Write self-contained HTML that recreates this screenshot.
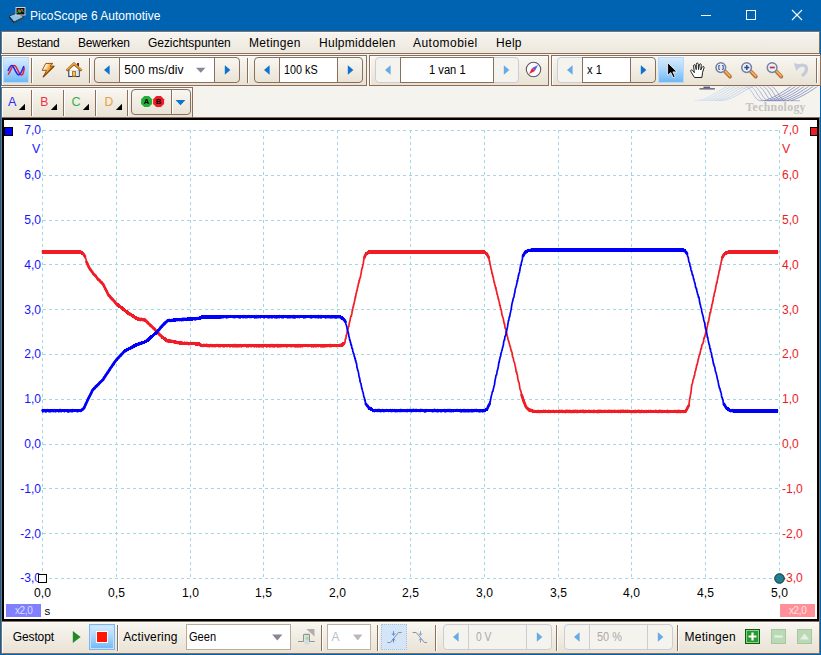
<!DOCTYPE html>
<html lang="nl">
<head>
<meta charset="utf-8">
<title>PicoScope 6 Automotive</title>
<style>
*{box-sizing:border-box;margin:0;padding:0}
html,body{width:821px;height:655px;overflow:hidden;background:#0063b1}
body{font-family:"Liberation Sans",sans-serif;font-size:12px;color:#000;position:relative}
.abs{position:absolute}
#title{position:absolute;left:0;top:0;width:821px;height:31px;background:#0063b1}
#title .t{position:absolute;left:30px;top:9px;color:#fff;font-size:12px;white-space:nowrap}
.strip{position:absolute;border:1px solid #8a6f5c;box-shadow:inset 1px 1px 0 #fdfcfa;background:linear-gradient(#f9f7f2,#e9e2d4)}
#menu span{position:absolute;top:3px;font-size:12px;white-space:nowrap;color:#000;line-height:16px}
#gap{position:absolute;left:1px;top:54px;width:819px;height:64px;background:#f5f3ee}
.selbtn{position:absolute;border:1px solid #b4dafc;background:linear-gradient(#d6ebfd,#a9d5fb 50%,#6fb8f6)}
#chartf{position:absolute;left:1px;top:117px;width:819px;height:505px;border:1px solid #8a6f5c}
#chart{position:absolute;left:2px;top:118px;width:817px;height:503px;background:#fff;border:2px solid #000}
#plot{position:absolute;left:0;top:0;width:821px;height:655px}
.yl{position:absolute;font-size:12.1px;height:16px;line-height:16px;white-space:nowrap}
.yl.b{right:780px;color:#1414ff;text-align:right}
.yl.r{left:782px;color:#ee1c25}
.xl{position:absolute;top:585px;width:40px;text-align:center;font-size:12.1px;line-height:16px;color:#000}
.lbl{position:absolute;font-size:12px;white-space:nowrap;line-height:16px}
#f_title{letter-spacing:0.02px}
#f_m1{letter-spacing:-0.22px}
#f_m2{letter-spacing:-0.20px}
#f_m3{letter-spacing:-0.05px}
#f_m4{letter-spacing:0.30px}
#f_m5{letter-spacing:0.28px}
#f_m6{letter-spacing:0.47px}
#f_m7{letter-spacing:0.27px}
#f_s1{letter-spacing:0.13px}
#f_s2{display:inline-block;transform-origin:0 50%;transform:scaleX(0.899)}
#f_s3{display:inline-block;transform-origin:0 50%;transform:scaleX(0.930)}
#f_s4{display:inline-block;transform-origin:0 50%;transform:scaleX(0.927)}
#f_g{letter-spacing:-0.13px}
#f_a{letter-spacing:0.18px}
#f_ge{display:inline-block;transform-origin:0 50%;transform:scaleX(0.923)}
#f_s5{display:inline-block;transform-origin:0 50%;transform:scaleX(0.855)}
#f_s6{display:inline-block;transform-origin:0 50%;transform:scaleX(0.910)}
#f_me{letter-spacing:0.23px}

</style>
</head>
<body>
<!-- title bar -->
<div id="title">
  <svg class="abs" style="left:8px;top:6px" width="18" height="18" viewBox="0 0 18 18">
    <polygon points="1,10 9,7 16,11 6,16" fill="#8ec3ea" stroke="#2b3540" stroke-width="1"/>
    <polygon points="1,10 6,16 6,17.5 1,11.5" fill="#1f2830"/>
    <polygon points="6,16 16,11 16,12.2 6,17.5" fill="#39444f"/>
    <rect x="8" y="1.5" width="9" height="7.5" fill="#111" stroke="#c8d2dc" stroke-width="1"/>
    <path d="M9.5 7 L11 4 L12 6.5 L13.5 3.5 L15.5 6" stroke="#28d040" stroke-width="1" fill="none"/>
    <path d="M9.5 4 L11.5 3 L13 5.5 L15 3" stroke="#e82020" stroke-width="1" fill="none"/>
  </svg>
  <div class="t" id="f_title">PicoScope 6 Automotive</div>
  <svg class="abs" style="left:690px;top:0" width="131" height="31" viewBox="0 0 131 31">
    <path d="M11 15.5 H21" stroke="#fff" stroke-width="1"/>
    <rect x="56.5" y="10.5" width="9" height="9" fill="none" stroke="#fff" stroke-width="1"/>
    <path d="M102 10 L112 20 M112 10 L102 20" stroke="#fff" stroke-width="1.1"/>
  </svg>
</div>

<!-- menu bar : rows 31..53, cols 1..819 -->
<div id="menu" class="strip" style="left:1px;top:31px;width:819px;height:23px;background:linear-gradient(#f6f4ef,#ede8dd)">
  <span id="f_m1" style="left:15px">Bestand</span>
  <span id="f_m2" style="left:76px">Bewerken</span>
  <span id="f_m3" style="left:146px">Gezichtspunten</span>
  <span id="f_m4" style="left:247px">Metingen</span>
  <span id="f_m5" style="left:317px">Hulpmiddelen</span>
  <span id="f_m6" style="left:411px">Automobiel</span>
  <span id="f_m7" style="left:494px">Help</span>
</div>

<div id="gap"></div>
<!-- toolbar 1 strips: rows 55..85 -->
<div class="strip" style="left:1px;top:55px;width:366px;height:31px"></div>
<div class="strip" style="left:369px;top:55px;width:180px;height:31px"></div>
<div class="strip" style="left:551px;top:55px;width:270px;height:31px"></div>
<!-- toolbar 2 strip: rows 87..117, cols 1..192 -->
<div class="strip" style="left:1px;top:87px;width:192px;height:31px"></div>

<!-- chart frame -->
<div id="chartf"></div><div id="chart"></div>
<!-- status strip -->
<div class="strip" style="left:1px;top:621px;width:819px;height:33px"></div>

<!-- selected buttons -->
<div class="selbtn" style="left:3px;top:57px;width:26px;height:26px"></div>
<div class="selbtn" style="left:658px;top:57px;width:26px;height:26px"></div>
<div class="selbtn" style="left:89px;top:624px;width:26px;height:26px;border-color:#7ab8f2;box-shadow:inset 0 0 0 1px #c4e2fd"></div>
<div class="selbtn" style="left:381px;top:624px;width:26px;height:26px;background:#d3e5f7;border:1px dotted #a8c4e0"></div>

<!-- separators -->
<div class="abs" style="left:31px;top:58px;width:2px;height:25px;border-left:1px solid #8a6f5c;border-right:1px solid #fff"></div>
<div class="abs" style="left:89px;top:58px;width:2px;height:25px;border-left:1px solid #8a6f5c;border-right:1px solid #fff"></div>
<div class="abs" style="left:247px;top:58px;width:2px;height:25px;border-left:1px solid #8a6f5c;border-right:1px solid #fff"></div>
<div class="abs" style="left:816px;top:58px;width:2px;height:25px;border-left:1px solid #8a6f5c;border-right:1px solid #fff"></div>
<div class="abs" style="left:31px;top:90px;width:2px;height:26px;border-left:1px solid #8a6f5c;border-right:1px solid #fff"></div>
<div class="abs" style="left:63px;top:90px;width:2px;height:26px;border-left:1px solid #8a6f5c;border-right:1px solid #fff"></div>
<div class="abs" style="left:95px;top:90px;width:2px;height:26px;border-left:1px solid #8a6f5c;border-right:1px solid #fff"></div>
<div class="abs" style="left:127px;top:90px;width:2px;height:26px;border-left:1px solid #8a6f5c;border-right:1px solid #fff"></div>
<div class="abs" style="left:117px;top:625px;width:2px;height:26px;border-left:1px solid #8a6f5c;border-right:1px solid #fff"></div>
<div class="abs" style="left:321px;top:625px;width:2px;height:26px;border-left:1px solid #8a6f5c;border-right:1px solid #fff"></div>
<div class="abs" style="left:377px;top:625px;width:2px;height:26px;border-left:1px solid #8a6f5c;border-right:1px solid #fff"></div>
<div class="abs" style="left:435px;top:625px;width:2px;height:26px;border-left:1px solid #8a6f5c;border-right:1px solid #fff"></div>
<div class="abs" style="left:556px;top:625px;width:2px;height:26px;border-left:1px solid #8a6f5c;border-right:1px solid #fff"></div>
<div class="abs" style="left:677px;top:625px;width:2px;height:26px;border-left:1px solid #8a6f5c;border-right:1px solid #fff"></div>

<!-- AB button rows 89..114 cols 131..190 -->
<div class="abs" style="left:131px;top:89px;width:41px;height:26px;border:1px solid #8a6f5c;border-radius:4px 0 0 4px;background:linear-gradient(#f9f7f2,#eae3d6)"></div>
<div class="abs" style="left:171px;top:89px;width:20px;height:26px;border:1px solid #8a6f5c;border-radius:0 4px 4px 0;background:linear-gradient(#f9f7f2,#eae3d6);box-shadow:inset 1px 0 0 #fff"></div>

<!-- combos in status bar -->
<div class="abs" style="left:186px;top:624px;width:105px;height:26px;border:1px solid #b9ad9f;background:#fff"></div>
<div class="abs" style="left:327px;top:624px;width:44px;height:26px;border:1px solid #bcb2a6;background:#fff"></div>

<div class="abs"  style="left:94px;top:57px;width:26px;height:26px;border:1px solid #8a6f5c;border-radius:4px 0 0 4px;background:linear-gradient(#f9f7f2,#eae3d6)"></div>
<div class="abs"  style="left:214px;top:57px;width:26px;height:26px;border:1px solid #8a6f5c;border-radius:0 4px 4px 0;background:linear-gradient(#f9f7f2,#eae3d6)"></div>
<div class="abs"  style="left:119px;top:57px;width:96px;height:26px;border:1px solid #8a6f5c;background:#fff"></div>
<div class="abs"  style="left:119px;top:57px;width:1px;height:26px;background:#8a6f5c"></div>
<div class="abs"  style="left:214px;top:57px;width:1px;height:26px;background:#8a6f5c"></div>
<span class="lbl" id="f_s1" style="left:124.3px;top:62px;color:#000">500 ms/div</span>
<div class="abs"  style="left:254px;top:57px;width:26px;height:26px;border:1px solid #8a6f5c;border-radius:4px 0 0 4px;background:linear-gradient(#f9f7f2,#eae3d6)"></div>
<div class="abs"  style="left:337px;top:57px;width:26px;height:26px;border:1px solid #8a6f5c;border-radius:0 4px 4px 0;background:linear-gradient(#f9f7f2,#eae3d6)"></div>
<div class="abs"  style="left:279px;top:57px;width:59px;height:26px;border:1px solid #8a6f5c;background:#fff"></div>
<div class="abs"  style="left:279px;top:57px;width:1px;height:26px;background:#8a6f5c"></div>
<div class="abs"  style="left:337px;top:57px;width:1px;height:26px;background:#8a6f5c"></div>
<span class="lbl" id="f_s2" style="left:283.6px;top:62px;color:#000">100 kS</span>
<div class="abs"  style="left:375px;top:57px;width:26px;height:26px;border:1px solid #cbcdd2;border-radius:4px 0 0 4px;background:#f5f3ee"></div>
<div class="abs"  style="left:493px;top:57px;width:26px;height:26px;border:1px solid #cbcdd2;border-radius:0 4px 4px 0;background:#f5f3ee"></div>
<div class="abs"  style="left:400px;top:57px;width:94px;height:26px;border:1px solid #8a6f5c;background:#fff"></div>
<div class="abs"  style="left:400px;top:57px;width:1px;height:26px;background:#8a6f5c"></div>
<div class="abs"  style="left:493px;top:57px;width:1px;height:26px;background:#8a6f5c"></div>
<span class="lbl" id="f_s3" style="left:428.6px;top:62px;color:#000">1 van 1</span>
<div class="abs"  style="left:557px;top:57px;width:26px;height:26px;border:1px solid #cbcdd2;border-radius:4px 0 0 4px;background:#f5f3ee"></div>
<div class="abs"  style="left:630px;top:57px;width:26px;height:26px;border:1px solid #8a6f5c;border-radius:0 4px 4px 0;background:linear-gradient(#f9f7f2,#eae3d6)"></div>
<div class="abs"  style="left:582px;top:57px;width:49px;height:26px;border:1px solid #8a6f5c;background:#fff"></div>
<div class="abs"  style="left:582px;top:57px;width:1px;height:26px;background:#8a6f5c"></div>
<div class="abs"  style="left:630px;top:57px;width:1px;height:26px;background:#8a6f5c"></div>
<span class="lbl" id="f_s4" style="left:586.6px;top:62px;color:#000">x 1</span>
<div class="abs"  style="left:443px;top:624px;width:26px;height:26px;border:1px solid #cbcdd2;border-radius:4px 0 0 4px;background:#f5f3ee"></div>
<div class="abs"  style="left:526px;top:624px;width:26px;height:26px;border:1px solid #cbcdd2;border-radius:0 4px 4px 0;background:#f5f3ee"></div>
<div class="abs"  style="left:468px;top:624px;width:59px;height:26px;border:1px solid #cbcdd2;background:#f5f3ee"></div>
<span class="lbl" id="f_s5" style="left:475.8px;top:629px;color:#a9a9a9">0 V</span>
<div class="abs"  style="left:564px;top:624px;width:26px;height:26px;border:1px solid #cbcdd2;border-radius:4px 0 0 4px;background:#f5f3ee"></div>
<div class="abs"  style="left:647px;top:624px;width:26px;height:26px;border:1px solid #cbcdd2;border-radius:0 4px 4px 0;background:#f5f3ee"></div>
<div class="abs"  style="left:589px;top:624px;width:59px;height:26px;border:1px solid #cbcdd2;background:#f5f3ee"></div>
<span class="lbl" id="f_s6" style="left:597.0px;top:629px;color:#a9a9a9">50 %</span>


<!-- text labels -->
<span class="lbl" style="left:8px;top:94px;color:#2a2aff;font-size:12.6px">A</span>
<span class="lbl" style="left:40.2px;top:94px;color:#f03040;font-size:12.2px">B</span>
<span class="lbl" style="left:71.6px;top:94px;color:#35b04a;font-size:12.6px">C</span>
<span class="lbl" style="left:104.4px;top:94px;color:#e8a040;font-size:12.2px">D</span>
<span class="lbl" id="f_g" style="left:12.8px;top:629px">Gestopt</span>
<span class="lbl" id="f_a" style="left:123.2px;top:629px">Activering</span>
<span class="lbl" id="f_ge" style="left:189.2px;top:629px">Geen</span>
<span class="lbl" style="left:331.5px;top:629px;color:#bcc0c6">A</span>
<span class="lbl" id="f_me" style="left:684.6px;top:629px">Metingen</span>

<!-- icon layer -->
<svg id="icons" class="abs" style="left:0;top:0" width="821" height="655" viewBox="0 0 821 655">
<polygon points="109.6,65.2 109.6,74.8 104.0,70.0" fill="#0a74d0"/>
<polygon points="224.8,65.2 224.8,74.8 230.4,70.0" fill="#0a74d0"/>
<polygon points="196.0,67.8 205.5,67.8 200.8,72.8" fill="#8d8395"/>
<polygon points="269.6,65.2 269.6,74.8 264.0,70.0" fill="#0a74d0"/>
<polygon points="347.8,65.2 347.8,74.8 353.4,70.0" fill="#0a74d0"/>
<polygon points="390.6,65.2 390.6,74.8 385.0,70.0" fill="#66abe8"/>
<polygon points="503.8,65.2 503.8,74.8 509.4,70.0" fill="#66abe8"/>
<polygon points="572.6,65.2 572.6,74.8 567.0,70.0" fill="#66abe8"/>
<polygon points="640.8,65.2 640.8,74.8 646.4,70.0" fill="#0a74d0"/>
<polygon points="458.6,632.2 458.6,641.8 453.0,637.0" fill="#66abe8"/>
<polygon points="536.8,632.2 536.8,641.8 542.4,637.0" fill="#66abe8"/>
<polygon points="579.6,632.2 579.6,641.8 574.0,637.0" fill="#66abe8"/>
<polygon points="657.8,632.2 657.8,641.8 663.4,637.0" fill="#66abe8"/>
  <!-- scope view (sine waves) -->
  <path d="M7.8 74.5 C9.5 74.5,11.5 65.5,14.3 65.5 S18.5 75,21.2 75 S23.6 70,24.4 67.5" fill="none" stroke="#ee1c2e" stroke-width="1.5"/>
  <path d="M8 71 C9.5 67,10.8 65.6,12.2 65.6 S16.3 75,18.6 75 S22.5 69,24 66" fill="none" stroke="#2222ee" stroke-width="1.5"/>
  <!-- lightning -->
  <defs>
    <linearGradient id="lg1" x1="0" y1="0.25" x2="1" y2="0.75"><stop offset="0.15" stop-color="#ffffff"/><stop offset="0.5" stop-color="#f4a830"/><stop offset="0.85" stop-color="#a85408"/></linearGradient>
  </defs>
  <path d="M45.8 63.4 L52.9 63.4 L50 66.2 L54 66.2 L43.3 76.8 L46.6 70.3 L42.2 70.3 Z" fill="url(#lg1)" stroke="#96520e" stroke-width="1" stroke-linejoin="round"/>
  <path d="M54 66.2 L43.3 76.8" stroke="#8a4608" stroke-width="1.3" stroke-linecap="round"/>
  <!-- home -->
  <rect x="77.1" y="63" width="1.9" height="4.6" fill="#5e1238"/>
  <rect x="68.8" y="69.6" width="10.4" height="6.9" fill="#fdfdff" stroke="#2c3c4c" stroke-width="1.1"/>
  <rect x="76.6" y="70.4" width="2" height="5.4" fill="#cfe4f4"/>
  <polygon points="68.6,70 74,64.8 79.4,70" fill="#fdfdff"/>
  <path d="M66.6 70.6 L74 63.8 L81.6 70.6" fill="none" stroke="#8a5210" stroke-width="2.6"/>
  <path d="M66.8 70 L74 63.4 L81.4 70" fill="none" stroke="#eea838" stroke-width="1.5"/>
  <rect x="72.4" y="71.6" width="3.2" height="4.6" fill="#f4c060" stroke="#a86a14" stroke-width="0.9"/>
  <!-- compass -->
  <circle cx="533.5" cy="69.5" r="7.2" fill="#fdfdfd" stroke="#5a5a66" stroke-width="1.1"/>
  <polygon points="538,65 534.9,70.9 532.1,68.1" fill="#5a5aee"/>
  <polygon points="529,74 532.1,68.1 534.9,70.9" fill="#ee2030"/>
  <!-- arrow cursor -->
  <path d="M667.6 62.6 L667.6 75.4 L670.8 72.6 L673.2 77.6 L675.2 76.7 L672.9 71.9 L677 71.9 Z" fill="#000" stroke="#fff" stroke-width="0.8"/>
  <!-- hand -->
  <path d="M694.5 77.5 L691.2 72.2 C689.8 69.8,691.6 69.2,692.8 70.8 L694.3 72.6 L693.6 66 C693.4 64.4,695.2 64.2,695.5 65.8 L696.2 69.6 L696.3 64.2 C696.3 62.6,698.2 62.6,698.3 64.2 L698.5 69.6 L699.4 64.8 C699.7 63.3,701.5 63.6,701.3 65.2 L700.7 70 L702.2 67.2 C702.9 65.8,704.6 66.5,704 68 L702.6 72.2 L701.9 77.5 Z" fill="#fff" stroke="#222" stroke-width="1" stroke-linejoin="round"/>
  <!-- zoom icons -->
  <g>
    <path d="M725.2 71.6 L730 76.6" stroke="#b87434" stroke-width="3.8" stroke-linecap="round"/>
    <path d="M725 71 L729.8 76" stroke="#f4b470" stroke-width="1.6" stroke-linecap="round"/>
    <circle cx="720.8" cy="67.6" r="4.7" fill="#e2eaf6" stroke="#74849e" stroke-width="1.8"/>
    <circle cx="720.8" cy="67.6" r="3.6" fill="none" stroke="#f6f8fc" stroke-width="0.8"/>
  </g>
  <g transform="translate(25.8 0)">
    <path d="M725.2 71.6 L730 76.6" stroke="#b87434" stroke-width="3.8" stroke-linecap="round"/>
    <path d="M725 71 L729.8 76" stroke="#f4b470" stroke-width="1.6" stroke-linecap="round"/>
    <circle cx="720.8" cy="67.6" r="4.7" fill="#e2eaf6" stroke="#74849e" stroke-width="1.8"/>
    <circle cx="720.8" cy="67.6" r="3.6" fill="none" stroke="#f6f8fc" stroke-width="0.8"/>
  </g>
  <g transform="translate(51.3 0)">
    <path d="M725.2 71.6 L730 76.6" stroke="#b87434" stroke-width="3.8" stroke-linecap="round"/>
    <path d="M725 71 L729.8 76" stroke="#f4b470" stroke-width="1.6" stroke-linecap="round"/>
    <circle cx="720.8" cy="67.6" r="4.7" fill="#e2eaf6" stroke="#74849e" stroke-width="1.8"/>
    <circle cx="720.8" cy="67.6" r="3.6" fill="none" stroke="#f6f8fc" stroke-width="0.8"/>
  </g>
  <path d="M719.8 65.5 H718.8 V69.5 H719.8 M722.2 65.5 H723.2 V69.5 H722.2" fill="none" stroke="#33489a" stroke-width="1"/>
  <path d="M744.3 67.5 H749.3 M746.8 65 V70" stroke="#33489a" stroke-width="1.5"/>
  <path d="M769.8 67.5 H774.8" stroke="#b83040" stroke-width="1.6"/>
  <!-- undo -->
  <path d="M798.5 66.6 C802.5 63.4,807.4 65.6,806.4 70 C806 72.2,804.4 74,802 76" fill="none" stroke="#c4ccd9" stroke-width="3.2"/>
  <polygon points="793.8,63.2 801.6,64.4 796.4,71" fill="#c4ccd9"/>
  <!-- channel dropdown triangles -->
  <polygon points="25,103.8 25,110 18.8,110" fill="#000"/>
  <polygon points="57,103.8 57,110 50.8,110" fill="#000"/>
  <polygon points="89,103.8 89,110 82.8,110" fill="#000"/>
  <polygon points="122,103.8 122,110 115.8,110" fill="#000"/>
  <!-- AB octagons -->
  <polygon points="144.3,96.1 148.9,96.1 152.1,99.3 152.1,103.9 148.9,107.1 144.3,107.1 141.1,103.9 141.1,99.3" fill="#22b03a"/>
  <polygon points="156.3,96.1 160.9,96.1 164.1,99.3 164.1,103.9 160.9,107.1 156.3,107.1 153.1,103.9 153.1,99.3" fill="#ee1c25"/>
  <text x="146.6" y="104.3" font-size="7.6" font-weight="bold" text-anchor="middle" font-family="Liberation Sans, sans-serif" fill="#000">A</text>
  <text x="158.6" y="104.3" font-size="7.6" font-weight="bold" text-anchor="middle" font-family="Liberation Sans, sans-serif" fill="#000">B</text>
  <polygon points="175.6,100 185.4,100 180.5,105.2" fill="#0a74d0"/>
  <!-- pico logo -->
  <defs>
    <linearGradient id="lgl" gradientUnits="userSpaceOnUse" x1="695" y1="0" x2="800" y2="0"><stop offset="0" stop-color="#cfe2f4"/><stop offset="0.45" stop-color="#a8c0e4"/><stop offset="0.7" stop-color="#6676b4"/><stop offset="1" stop-color="#7a88c0"/></linearGradient>
    <clipPath id="cpl"><rect x="690" y="86.6" width="130" height="20"/></clipPath>
  </defs>
  <g fill="none" stroke="url(#lgl)" stroke-width="0.6" clip-path="url(#cpl)">
    <path d="M694.0 100.7 C712.0 100.7,722.0 84,738.0 84 S752.0 100.7,761.0 100.7 H800.0"/>
    <path d="M698.2 100.7 C716.2 100.7,726.2 84,742.2 84 S756.2 100.7,765.2 100.7"/>
    <path d="M702.4 100.7 C720.4 100.7,730.4 84,746.4 84 S760.4 100.7,769.4 100.7"/>
    <path d="M706.6 100.7 C724.6 100.7,734.6 84,750.6 84 S764.6 100.7,773.6 100.7"/>
    <path d="M710.8 100.7 C728.8 100.7,738.8 84,754.8 84 S768.8 100.7,777.8 100.7"/>
    <path d="M715.0 100.7 C733.0 100.7,743.0 84,759.0 84 S773.0 100.7,782.0 100.7"/>
    <path d="M719.2 100.7 C737.2 100.7,747.2 84,763.2 84 S777.2 100.7,786.2 100.7"/>
  </g>
  <path d="M765.0 100.7 Q778.0 96,793.0 85 M769.4 100.7 Q782.4 96,797.4 85 M773.8 100.7 Q786.8 96,801.8 85 M778.2 100.7 Q791.2 96,806.2 85 M782.6 100.7 Q795.6 96,810.6 85 M787.0 100.7 Q800.0 96,815.0 85 M791.4 100.7 Q804.4 96,819.4 85" fill="none" stroke="#5666ae" stroke-width="0.6" clip-path="url(#cpl)"/>
  <rect x="699.5" y="88" width="15.4" height="1.6" fill="#7a7480"/>
  <rect x="703.5" y="86.6" width="6.6" height="1.5" fill="#5a5a88"/>
  <text x="805.8" y="110.8" text-anchor="end" font-family="Liberation Serif, serif" font-weight="bold" font-size="11.8" letter-spacing="0.3" fill="#c6c2be">Technology</text>

  <!-- status bar icons -->
  <polygon points="72.8,631 72.8,643 80.6,637" fill="#1e8a28"/>
  <rect x="96" y="631" width="12" height="12" fill="#fff"/>
  <rect x="97" y="632" width="10" height="10" fill="#ff1500"/>
  <polygon points="272.2,634.4 282.4,634.4 277.3,640.4" fill="#8d8395"/>
  <polygon points="353,634.4 362.4,634.4 357.7,640.4" fill="#bdb7b6"/>
  <!-- step icon -->
  <polygon points="306.4,629 314.5,629 314.5,636.6" fill="#b2aca8"/>
  <rect x="304.4" y="632.8" width="5.4" height="11.6" fill="#d2dde0"/>
  <path d="M298 641.5 H303.5 V634.5 H309.5 V641.5 H314.8" fill="none" stroke="#98928e" stroke-width="1"/>
  <circle cx="307.2" cy="638.2" r="1.5" fill="#a0dc98"/>
  <!-- rising edge -->
  <path d="M387.3 642.5 H390.6 L398.4 632.5 H401.7" fill="none" stroke="#8e9298" stroke-width="1"/>
  <path d="M393.5 631.2 V635.2 M393.5 642.6 V638.6 M392 633.4 L393.5 635.4 L395 633.4 M392 640.4 L393.5 638.4 L395 640.4" fill="none" stroke="#5a8ede" stroke-width="1"/>
  <!-- falling edge -->
  <path d="M412.6 632.5 H416.2 L424.4 642.5 H427" fill="none" stroke="#8e9298" stroke-width="1"/>
  <path d="M420.5 631.2 V635.2 M420.5 642.6 V638.6 M419 633.4 L420.5 635.4 L422 633.4 M419 640.4 L420.5 638.4 L422 640.4" fill="none" stroke="#7aa6e4" stroke-width="1"/>
  <!-- measurement buttons -->
  <rect x="745.5" y="629.5" width="14" height="14" fill="#2a9a30" stroke="#0e5a14" stroke-width="1"/>
  <rect x="746.5" y="630.5" width="12" height="12" fill="none" stroke="#86d488" stroke-width="1"/>
  <path d="M752.5 632.5 V640.5 M748.5 636.5 H756.5" stroke="#fff" stroke-width="2.2"/>
  <rect x="771.5" y="629.5" width="14" height="14" fill="#b9dab4" stroke="#a6c6a2" stroke-width="1"/>
  <path d="M774.5 636.5 H782.5" stroke="#e6f0e2" stroke-width="2.2"/>
  <rect x="797.5" y="629.5" width="14" height="14" fill="#b9dab4" stroke="#a6c6a2" stroke-width="1"/>
  <polygon points="800,639.5 809,639.5 804.5,633.5" fill="#e6f0e2"/>
</svg>

<!-- plot -->
<svg id="plot" viewBox="0 0 821 655">
  <g stroke="#a4d6e6" stroke-width="1" stroke-dasharray="3 3" fill="none" shape-rendering="crispEdges">
<line x1="42.5" y1="130" x2="42.5" y2="579"/>
<line x1="116.5" y1="130" x2="116.5" y2="579"/>
<line x1="190.5" y1="130" x2="190.5" y2="579"/>
<line x1="263.5" y1="130" x2="263.5" y2="579"/>
<line x1="337.5" y1="130" x2="337.5" y2="579"/>
<line x1="410.5" y1="130" x2="410.5" y2="579"/>
<line x1="484.5" y1="130" x2="484.5" y2="579"/>
<line x1="558.5" y1="130" x2="558.5" y2="579"/>
<line x1="631.5" y1="130" x2="631.5" y2="579"/>
<line x1="705.5" y1="130" x2="705.5" y2="579"/>
<line x1="779.5" y1="130" x2="779.5" y2="579"/>
<line x1="43" y1="130.5" x2="780" y2="130.5"/>
<line x1="43" y1="175.5" x2="780" y2="175.5"/>
<line x1="43" y1="220.5" x2="780" y2="220.5"/>
<line x1="43" y1="264.5" x2="780" y2="264.5"/>
<line x1="43" y1="309.5" x2="780" y2="309.5"/>
<line x1="43" y1="354.5" x2="780" y2="354.5"/>
<line x1="43" y1="399.5" x2="780" y2="399.5"/>
<line x1="43" y1="444.5" x2="780" y2="444.5"/>
<line x1="43" y1="488.5" x2="780" y2="488.5"/>
<line x1="43" y1="533.5" x2="780" y2="533.5"/>
<line x1="43" y1="578.5" x2="780" y2="578.5"/>
  </g>
  <path d="M42.0 252.0L80.0 252.0L83.0 253.5M116.7 304.0L128.6 313.3L137.8 319.0L145.0 320.0M162.0 337.0L167.0 340.6L180.0 343.0L189.0 343.6L199.0 344.0L201.5 345.4L230.0 345.8L338.0 345.8L342.0 345.0L344.5 343.0M366.0 254.0L369.0 252.0L484.0 252.0L486.5 253.5M529.0 410.0L533.8 411.4L685.6 411.4M724.0 254.5L726.0 252.8L728.5 252.1L777.6 252.0" fill="none" stroke="#f01c26" stroke-width="3.3" stroke-linejoin="round" stroke-linecap="butt" shape-rendering="crispEdges"/>
  <path d="M83.0 253.5L85.0 256.5M86.5 262.0L89.0 267.5L92.9 273.0L98.0 279.0L103.0 284.0L108.5 295.0L116.7 304.0M145.0 320.0L156.0 330.7L162.0 337.0M364.4 257.5L366.0 254.0M486.5 253.5L488.7 257.5M521.6 395.0L524.0 402.0L526.0 407.0L529.0 410.0M685.6 411.4L688.7 405.6M722.3 257.5L724.0 254.5" fill="none" stroke="#f01c26" stroke-width="2.7" stroke-linejoin="round" stroke-linecap="round"/>
  <polyline points="42.0,251.6 42.3,251.2 42.6,252.3 42.9,251.0 43.2,252.1 43.5,251.7 43.8,251.0 44.1,252.0 44.4,250.9 44.7,251.8 45.0,251.0 45.3,251.1 45.6,251.8 45.9,252.8 46.2,251.1 46.5,251.4 46.8,252.3 47.1,253.0 47.4,252.2 47.7,251.8 48.0,253.1 48.3,251.0 48.6,252.8 48.9,251.5 49.2,251.2 49.5,251.1 49.8,251.6 50.1,252.7 50.4,251.3 50.7,252.2 51.0,252.3 51.3,251.7 51.6,252.1 51.9,251.0 52.2,251.0 52.5,251.3 52.8,252.4 53.1,251.8 53.4,251.6 53.7,252.2 54.0,251.9 54.3,251.5 54.6,252.7 54.9,252.5 55.2,251.4 55.5,252.2 55.8,252.1 56.1,252.9 56.4,252.5 56.7,251.5 57.0,253.1 57.3,251.1 57.6,251.8 57.9,252.6 58.2,251.2 58.5,252.0 58.8,250.9 59.1,252.4 59.4,252.6 59.7,252.2 60.0,252.9 60.3,251.6 60.6,252.4 60.9,252.2 61.2,252.2 61.5,251.9 61.8,252.8 62.1,253.0 62.4,251.9 62.7,252.4 63.0,251.0 63.3,252.5 63.6,252.3 63.9,253.1 64.2,252.7 64.5,251.5 64.8,251.7 65.1,252.4 65.4,250.9 65.7,251.9 66.0,251.2 66.3,251.1 66.6,251.0 66.9,252.6 67.2,251.1 67.5,251.4 67.8,251.7 68.1,252.9 68.4,251.0 68.7,251.9 69.0,252.1 69.3,252.9 69.6,252.7 69.9,252.8 70.2,251.5 70.5,251.8 70.8,251.7 71.1,252.9 71.4,253.1 71.7,251.2 72.0,251.3 72.3,251.4 72.6,251.4 72.9,252.0 73.2,252.2 73.5,251.5 73.8,250.9 74.1,251.8 74.4,251.7 74.7,252.2 75.0,253.0 75.3,252.4 75.6,252.0 75.9,252.3 76.2,252.4 76.5,251.0 76.8,252.9 77.1,252.6 77.4,252.9 77.7,252.7 78.0,251.8 78.3,251.8 78.6,251.1 78.9,252.3 79.2,251.0 79.5,251.0 79.8,251.3 80.1,251.3 80.4,251.8 80.7,251.3 81.0,251.4 81.3,251.8 81.6,251.9 81.9,252.6 82.2,252.0 82.5,254.1 82.8,253.7 83.1,252.8 83.4,253.5 83.7,254.2 84.0,254.7 84.3,254.6 84.6,256.7 84.9,257.5 85.2,257.2 85.5,258.3 85.8,258.5 86.1,259.6 86.4,261.3 86.7,261.9 87.0,263.9 87.3,263.0 87.6,263.3 87.9,266.1 88.2,265.8 88.5,265.6 88.8,267.2 89.1,266.6 89.4,268.1 89.7,269.6 90.0,269.7 90.3,269.8 90.6,269.2 90.9,269.9 91.2,269.8 91.5,271.7 91.8,271.5 92.1,272.5 92.4,271.9 92.7,272.1 93.0,273.8 93.3,274.6 93.6,274.6 93.9,274.9 94.2,275.3 94.5,275.4 94.8,274.6 95.1,275.6 95.4,275.6 95.7,275.2 96.0,275.6 96.3,276.5 96.6,276.8 96.9,278.1 97.2,279.1 97.5,278.3 97.8,279.8 98.1,280.2 98.4,280.4 98.7,279.4 99.0,279.4 99.3,279.7 99.6,279.9 99.9,280.2 100.2,281.5 100.5,282.4 100.8,282.6 101.1,282.1 101.4,282.8 101.7,283.4 102.0,282.0 102.3,283.7 102.6,284.5 102.9,284.5 103.2,285.0 103.5,284.9 103.8,284.9 104.1,286.9 104.4,286.4 104.7,288.1 105.0,289.1 105.3,288.4 105.6,289.0 105.9,290.8 106.2,290.9 106.5,290.2 106.8,290.7 107.1,291.4 107.4,293.7 107.7,294.1 108.0,293.2 108.3,295.4 108.6,296.2 108.9,295.8 109.2,295.4 109.5,296.2 109.8,295.6 110.1,295.6 110.4,298.2 110.7,297.8 111.0,297.8 111.3,299.1 111.6,298.3 111.9,299.6 112.2,299.8 112.5,298.7 112.8,299.1 113.1,299.6 113.4,299.8 113.7,300.9 114.0,300.5 114.3,301.2 114.6,300.8 114.9,303.0 115.2,302.0 115.5,302.6 115.8,303.2 116.1,304.3 116.4,303.5 116.7,305.0 117.0,304.2 117.3,304.5 117.6,304.8 117.9,303.8 118.2,305.0 118.5,304.7 118.8,304.5 119.1,306.6 119.4,305.4 119.7,306.3 120.0,307.1 120.3,306.9 120.6,306.6 120.9,307.3 121.2,307.6 121.5,308.4 121.8,307.1 122.1,308.4 122.4,307.9 122.7,308.2 123.0,309.5 123.3,309.2 123.6,309.5 123.9,310.2 124.2,310.8 124.5,310.0 124.8,310.6 125.1,310.6 125.4,310.8 125.7,311.5 126.0,311.2 126.3,311.6 126.6,311.7 126.9,313.0 127.2,312.7 127.5,313.3 127.8,313.7 128.1,312.4 128.4,313.3 128.7,314.4 129.0,314.3 129.3,312.9 129.6,313.0 129.9,314.0 130.2,313.3 130.5,313.9 130.8,313.7 131.1,315.2 131.4,315.7 131.7,316.1 132.0,314.6 132.3,316.1 132.6,316.1 132.9,315.1 133.2,317.0 133.5,317.4 133.8,315.9 134.1,317.7 134.4,316.7 134.7,317.1 135.0,318.4 135.3,318.2 135.6,316.9 135.9,317.7 136.2,318.0 136.5,317.8 136.8,317.7 137.1,318.1 137.4,319.3 137.7,317.8 138.0,319.2 138.3,318.9 138.6,318.0 138.9,318.8 139.2,319.5 139.5,319.3 139.8,318.3 140.1,320.4 140.4,320.0 140.7,320.5 141.0,318.5 141.3,318.9 141.6,318.5 141.9,320.2 142.2,319.1 142.5,318.8 142.8,319.5 143.1,320.7 143.4,320.5 143.7,319.3 144.0,319.1 144.3,320.9 144.6,320.1 144.9,320.4 145.2,319.3 145.5,319.5 145.8,321.2 146.1,320.9 146.4,320.4 146.7,322.7 147.0,322.3 147.3,322.9 147.6,321.6 147.9,323.6 148.2,322.1 148.5,324.2 148.8,323.6 149.1,323.6 149.4,324.4 149.7,325.6 150.0,324.3 150.3,324.3 150.6,325.5 150.9,325.1 151.2,325.1 151.5,325.5 151.8,325.6 152.1,326.2 152.4,326.8 152.7,327.0 153.0,328.4 153.3,327.6 153.6,328.4 153.9,327.9 154.2,328.6 154.5,328.1 154.8,329.0 155.1,328.7 155.4,330.7 155.7,330.5 156.0,330.0 156.3,331.0 156.6,332.3 156.9,330.7 157.2,332.7 157.5,332.1 157.8,332.6 158.1,333.7 158.4,333.0 158.7,333.6 159.0,334.3 159.3,335.3 159.6,334.1 159.9,335.6 160.2,335.6 160.5,335.7 160.8,335.5 161.1,335.7 161.4,335.3 161.7,335.8 162.0,336.0 162.3,337.8 162.6,336.9 162.9,336.9 163.2,336.9 163.5,338.9 163.8,339.1 164.1,338.9 164.4,338.2 164.7,338.4 165.0,338.7 165.3,339.3 165.6,338.8 165.9,339.7 166.2,339.5 166.5,341.3 166.8,341.5 167.1,340.7 167.4,340.1 167.7,341.8 168.0,340.3 168.3,340.5 168.6,339.7 168.9,340.7 169.2,340.9 169.5,341.1 169.8,340.4 170.1,341.2 170.4,340.1 170.7,340.7 171.0,340.4 171.3,341.2 171.6,340.4 171.9,340.4 172.2,341.1 172.5,341.0 172.8,341.9 173.1,341.8 173.4,342.4 173.7,342.2 174.0,342.4 174.3,342.8 174.6,341.7 174.9,341.7 175.2,343.2 175.5,341.4 175.8,342.7 176.1,342.6 176.4,341.3 176.7,343.2 177.0,343.3 177.3,342.8 177.6,343.1 177.9,343.3 178.2,341.8 178.5,342.8 178.8,342.8 179.1,343.6 179.4,343.6 179.7,343.7 180.0,343.2 180.3,343.9 180.6,343.5 180.9,343.5 181.2,342.5 181.5,342.0 181.8,342.3 182.1,342.8 182.4,342.3 182.7,344.0 183.0,343.3 183.3,343.5 183.6,343.5 183.9,343.7 184.2,343.3 184.5,342.2 184.8,344.0 185.1,343.9 185.4,343.4 185.7,343.5 186.0,343.8 186.3,342.4 186.6,344.0 186.9,342.9 187.2,342.5 187.5,343.0 187.8,344.0 188.1,342.9 188.4,344.1 188.7,344.7 189.0,343.6 189.3,343.3 189.6,343.6 189.9,344.1 190.2,344.3 190.5,343.9 190.8,344.0 191.1,342.7 191.4,342.9 191.7,343.1 192.0,344.3 192.3,343.3 192.6,343.9 192.9,342.6 193.2,342.8 193.5,343.2 193.8,344.2 194.1,344.2 194.4,344.2 194.7,343.3 195.0,343.9 195.3,343.8 195.6,343.8 195.9,343.0 196.2,344.8 196.5,343.2 196.8,345.0 197.1,344.9 197.4,342.8 197.7,343.9 198.0,344.7 198.3,345.0 198.6,343.9 198.9,343.5 199.2,343.4 199.5,345.3 199.8,343.8 200.1,344.8 200.4,344.0 200.7,345.0 201.0,346.2 201.3,344.4 201.6,346.1 201.9,345.4 202.2,346.3 202.5,345.9 202.8,344.8 203.1,346.3 203.4,345.4 203.7,344.3 204.0,344.3 204.3,345.4 204.6,345.3 204.9,345.0 205.2,344.6 205.5,345.1 205.8,345.0 206.1,346.2 206.4,344.3 206.7,346.0 207.0,346.3 207.3,344.6 207.6,346.5 207.9,346.0 208.2,346.4 208.5,345.0 208.8,345.2 209.1,345.3 209.4,346.7 209.7,345.7 210.0,345.2 210.3,345.4 210.6,345.0 210.9,344.5 211.2,344.6 211.5,346.3 211.8,345.1 212.1,346.6 212.4,345.0 212.7,345.0 213.0,345.6 213.3,344.9 213.6,345.3 213.9,346.6 214.2,346.5 214.5,346.3 214.8,345.9 215.1,346.5 215.4,346.6 215.7,345.7 216.0,346.1 216.3,344.6 216.6,346.1 216.9,345.5 217.2,346.2 217.5,346.0 217.8,345.1 218.1,344.6 218.4,346.6 218.7,344.8 219.0,345.6 219.3,345.3 219.6,345.2 219.9,346.2 220.2,346.8 220.5,345.1 220.8,346.0 221.1,345.2 221.4,345.8 221.7,345.4 222.0,344.9 222.3,344.9 222.6,345.0 222.9,346.6 223.2,345.7 223.5,345.1 223.8,346.6 224.1,346.9 224.4,345.6 224.7,344.9 225.0,345.0 225.3,344.8 225.6,345.4 225.9,344.8 226.2,345.1 226.5,345.2 226.8,345.9 227.1,346.6 227.4,346.3 227.7,345.6 228.0,345.6 228.3,345.8 228.6,345.5 228.9,345.4 229.2,344.8 229.5,345.3 229.8,346.9 230.1,344.9 230.4,345.8 230.7,346.1 231.0,346.6 231.3,345.1 231.6,345.3 231.9,345.2 232.2,345.6 232.5,345.7 232.8,346.8 233.1,346.6 233.4,346.7 233.7,344.7 234.0,344.7 234.3,346.3 234.6,346.7 234.9,345.7 235.2,346.0 235.5,344.7 235.8,345.6 236.1,346.8 236.4,346.5 236.7,346.6 237.0,346.9 237.3,345.2 237.6,344.9 237.9,345.0 238.2,345.9 238.5,346.2 238.8,346.8 239.1,346.3 239.4,346.1 239.7,346.4 240.0,345.7 240.3,345.9 240.6,344.7 240.9,346.4 241.2,345.2 241.5,346.8 241.8,346.1 242.1,345.3 242.4,344.9 242.7,345.2 243.0,346.1 243.3,346.3 243.6,344.9 243.9,344.8 244.2,345.9 244.5,346.0 244.8,345.5 245.1,345.2 245.4,346.0 245.7,344.7 246.0,345.3 246.3,345.7 246.6,346.9 246.9,346.1 247.2,346.7 247.5,345.7 247.8,345.2 248.1,345.2 248.4,346.9 248.7,346.3 249.0,345.4 249.3,344.7 249.6,345.8 249.9,346.2 250.2,345.6 250.5,345.2 250.8,346.2 251.1,346.8 251.4,345.2 251.7,344.7 252.0,345.4 252.3,345.6 252.6,346.2 252.9,345.1 253.2,346.5 253.5,346.3 253.8,345.8 254.1,345.1 254.4,346.9 254.7,345.4 255.0,346.5 255.3,345.2 255.6,345.2 255.9,346.4 256.2,345.3 256.5,346.8 256.8,345.8 257.1,345.1 257.4,345.2 257.7,345.6 258.0,346.2 258.3,346.8 258.6,345.0 258.9,345.6 259.2,345.1 259.5,346.9 259.8,345.0 260.1,344.8 260.4,344.8 260.7,345.6 261.0,346.7 261.3,346.7 261.6,346.3 261.9,346.9 262.2,346.8 262.5,345.4 262.8,345.1 263.1,346.8 263.4,346.4 263.7,344.7 264.0,346.2 264.3,345.5 264.6,345.5 264.9,345.4 265.2,345.0 265.5,344.7 265.8,345.3 266.1,345.5 266.4,346.8 266.7,344.9 267.0,346.9 267.3,345.1 267.6,345.5 267.9,346.5 268.2,346.5 268.5,345.6 268.8,344.8 269.1,345.7 269.4,345.5 269.7,346.8 270.0,345.1 270.3,345.5 270.6,346.7 270.9,344.7 271.2,345.6 271.5,346.5 271.8,346.4 272.1,344.7 272.4,344.7 272.7,344.8 273.0,346.8 273.3,345.2 273.6,346.4 273.9,346.7 274.2,345.4 274.5,345.3 274.8,346.9 275.1,346.1 275.4,345.3 275.7,346.3 276.0,345.4 276.3,345.3 276.6,344.7 276.9,346.4 277.2,346.8 277.5,346.1 277.8,346.8 278.1,344.7 278.4,345.2 278.7,345.7 279.0,346.9 279.3,346.8 279.6,345.5 279.9,345.2 280.2,345.6 280.5,345.8 280.8,346.8 281.1,345.1 281.4,346.5 281.7,346.3 282.0,346.5 282.3,346.4 282.6,346.0 282.9,345.4 283.2,345.4 283.5,345.5 283.8,346.4 284.1,344.8 284.4,345.1 284.7,346.4 285.0,345.2 285.3,344.8 285.6,344.7 285.9,345.9 286.2,345.4 286.5,346.9 286.8,346.7 287.1,346.9 287.4,345.3 287.7,344.8 288.0,344.9 288.3,345.8 288.6,346.3 288.9,345.7 289.2,345.2 289.5,345.6 289.8,346.1 290.1,346.2 290.4,346.4 290.7,346.6 291.0,346.2 291.3,344.9 291.6,346.6 291.9,345.3 292.2,346.0 292.5,345.5 292.8,346.3 293.1,345.1 293.4,345.2 293.7,345.2 294.0,345.0 294.3,346.7 294.6,346.0 294.9,345.4 295.2,345.6 295.5,346.9 295.8,345.8 296.1,345.2 296.4,346.5 296.7,346.2 297.0,346.9 297.3,344.9 297.6,345.7 297.9,346.5 298.2,346.6 298.5,346.8 298.8,344.7 299.1,345.3 299.4,344.9 299.7,345.1 300.0,346.9 300.3,346.0 300.6,346.8 300.9,345.5 301.2,346.6 301.5,345.7 301.8,345.2 302.1,346.4 302.4,346.8 302.7,344.9 303.0,346.0 303.3,346.1 303.6,345.2 303.9,345.5 304.2,345.0 304.5,345.1 304.8,345.2 305.1,346.0 305.4,346.1 305.7,345.1 306.0,344.7 306.3,345.4 306.6,346.2 306.9,345.1 307.2,345.4 307.5,345.1 307.8,346.5 308.1,345.9 308.4,344.8 308.7,344.9 309.0,345.6 309.3,345.9 309.6,346.1 309.9,344.9 310.2,345.0 310.5,346.2 310.8,345.6 311.1,345.3 311.4,345.4 311.7,346.8 312.0,345.4 312.3,346.0 312.6,345.5 312.9,345.6 313.2,346.6 313.5,346.9 313.8,345.5 314.1,345.1 314.4,346.3 314.7,345.1 315.0,344.7 315.3,346.7 315.6,345.6 315.9,346.5 316.2,345.6 316.5,346.7 316.8,345.7 317.1,345.0 317.4,344.7 317.7,345.9 318.0,346.1 318.3,346.7 318.6,344.9 318.9,346.1 319.2,345.5 319.5,345.8 319.8,345.0 320.1,345.3 320.4,345.8 320.7,346.8 321.0,344.9 321.3,345.8 321.6,346.5 321.9,346.9 322.2,345.1 322.5,344.9 322.8,346.8 323.1,346.9 323.4,345.8 323.7,344.8 324.0,346.8 324.3,345.5 324.6,346.7 324.9,346.1 325.2,346.5 325.5,345.0 325.8,346.5 326.1,345.2 326.4,345.6 326.7,346.6 327.0,346.6 327.3,345.1 327.6,345.2 327.9,345.6 328.2,345.8 328.5,345.5 328.8,344.9 329.1,345.2 329.4,346.3 329.7,346.7 330.0,344.7 330.3,345.9 330.6,346.4 330.9,344.7 331.2,346.6 331.5,344.9 331.8,346.0 332.1,345.9 332.4,346.1 332.7,345.4 333.0,345.6 333.3,346.0 333.6,345.6 333.9,346.2 334.2,345.7 334.5,345.7 334.8,344.7 335.1,346.1 335.4,345.8 335.7,345.2 336.0,346.4 336.3,346.4 336.6,345.7 336.9,345.1 337.2,345.7 337.5,344.9 337.8,344.9 338.1,345.6 338.4,344.8 338.7,345.5 339.0,345.6 339.3,344.5 339.6,345.8 339.9,344.5 340.2,345.9 340.5,345.9 340.8,345.3 341.1,344.2 341.4,345.1 341.7,344.8 342.0,346.0 342.3,343.9 342.6,345.3 342.9,345.4 343.2,344.6 343.5,344.5 343.8,342.9 344.1,344.4 344.4,343.1 344.7,343.3 345.0,342.0 345.3,339.1 345.6,339.3 345.9,338.5 346.2,335.3 346.5,334.8 346.8,334.5 347.1,332.0 347.4,332.5 347.7,329.9 348.0,329.9 348.3,327.1 348.6,326.6 348.9,326.3 349.2,323.4 349.5,322.3 349.8,321.6 350.1,319.9 350.4,318.0 350.7,317.1 351.0,315.8 351.3,316.3 351.6,314.5 351.9,313.7 352.2,310.7 352.5,310.8 352.8,307.9 353.1,307.5 353.4,306.3 353.7,304.3 354.0,304.2 354.3,302.1 354.6,300.7 354.9,300.1 355.2,296.9 355.5,297.6 355.8,295.4 356.1,293.5 356.4,293.1 356.7,290.5 357.0,290.9 357.3,288.8 357.6,287.1 357.9,286.8 358.2,284.9 358.5,283.1 358.8,283.2 359.1,280.4 359.4,281.0 359.7,278.5 360.0,278.2 360.3,277.8 360.6,275.7 360.9,274.7 361.2,272.7 361.5,270.6 361.8,269.2 362.1,268.0 362.4,267.6 362.7,265.7 363.0,264.4 363.3,263.8 363.6,260.6 363.9,259.3 364.2,258.8 364.5,256.2 364.8,255.5 365.1,255.6 365.4,254.4 365.7,254.3 366.0,253.4 366.3,254.0 366.6,253.8 366.9,252.7 367.2,253.5 367.5,252.9 367.8,252.0 368.1,253.6 368.4,251.8 368.7,251.4 369.0,251.1 369.3,252.3 369.6,252.9 369.9,252.6 370.2,251.8 370.5,251.5 370.8,250.9 371.1,252.3 371.4,252.1 371.7,251.7 372.0,252.3 372.3,251.9 372.6,253.0 372.9,252.5 373.2,251.4 373.5,252.9 373.8,251.0 374.1,252.1 374.4,251.8 374.7,251.4 375.0,251.0 375.3,252.6 375.6,250.9 375.9,252.1 376.2,253.0 376.5,251.2 376.8,251.3 377.1,252.2 377.4,252.0 377.7,252.3 378.0,252.7 378.3,251.3 378.6,251.6 378.9,251.5 379.2,251.0 379.5,252.9 379.8,252.7 380.1,252.5 380.4,250.9 380.7,252.8 381.0,252.6 381.3,251.9 381.6,252.6 381.9,251.9 382.2,251.4 382.5,251.1 382.8,251.4 383.1,250.9 383.4,251.6 383.7,252.6 384.0,252.4 384.3,252.8 384.6,252.5 384.9,251.5 385.2,252.1 385.5,251.9 385.8,252.7 386.1,252.1 386.4,251.5 386.7,252.3 387.0,253.1 387.3,251.3 387.6,252.9 387.9,250.9 388.2,251.4 388.5,251.4 388.8,252.6 389.1,253.0 389.4,252.6 389.7,251.6 390.0,252.9 390.3,251.6 390.6,251.4 390.9,252.9 391.2,252.3 391.5,252.4 391.8,252.4 392.1,253.1 392.4,251.9 392.7,252.8 393.0,252.5 393.3,252.8 393.6,251.9 393.9,252.5 394.2,252.2 394.5,251.6 394.8,251.3 395.1,252.3 395.4,251.0 395.7,252.9 396.0,251.2 396.3,250.9 396.6,251.1 396.9,253.0 397.2,251.6 397.5,251.2 397.8,250.9 398.1,250.9 398.4,252.4 398.7,252.3 399.0,252.5 399.3,252.5 399.6,251.0 399.9,252.2 400.2,251.7 400.5,252.7 400.8,252.7 401.1,252.9 401.4,251.0 401.7,252.8 402.0,253.0 402.3,253.0 402.6,251.1 402.9,251.3 403.2,251.1 403.5,250.9 403.8,252.8 404.1,252.7 404.4,252.3 404.7,252.7 405.0,252.3 405.3,251.5 405.6,251.1 405.9,251.1 406.2,252.6 406.5,251.3 406.8,251.6 407.1,251.8 407.4,250.9 407.7,251.4 408.0,251.5 408.3,252.5 408.6,251.7 408.9,251.6 409.2,253.1 409.5,252.0 409.8,252.8 410.1,252.3 410.4,250.9 410.7,251.8 411.0,251.9 411.3,252.6 411.6,251.6 411.9,252.5 412.2,252.1 412.5,251.3 412.8,252.8 413.1,251.1 413.4,252.7 413.7,251.2 414.0,250.9 414.3,251.3 414.6,252.6 414.9,253.1 415.2,250.9 415.5,252.0 415.8,252.0 416.1,252.7 416.4,251.3 416.7,252.0 417.0,251.6 417.3,252.8 417.6,251.4 417.9,253.0 418.2,251.5 418.5,251.3 418.8,252.5 419.1,252.0 419.4,251.1 419.7,252.3 420.0,251.0 420.3,252.7 420.6,252.5 420.9,252.7 421.2,252.3 421.5,251.7 421.8,251.8 422.1,251.8 422.4,252.9 422.7,251.0 423.0,252.9 423.3,250.9 423.6,251.3 423.9,251.5 424.2,252.9 424.5,252.0 424.8,251.7 425.1,252.9 425.4,251.4 425.7,251.9 426.0,252.1 426.3,252.6 426.6,252.6 426.9,252.3 427.2,251.7 427.5,251.6 427.8,251.2 428.1,252.8 428.4,252.4 428.7,252.6 429.0,251.2 429.3,251.9 429.6,252.6 429.9,252.2 430.2,251.1 430.5,251.9 430.8,252.9 431.1,251.4 431.4,251.3 431.7,251.5 432.0,252.5 432.3,252.8 432.6,251.2 432.9,251.2 433.2,251.4 433.5,251.6 433.8,252.1 434.1,251.2 434.4,251.6 434.7,251.3 435.0,253.1 435.3,252.5 435.6,251.1 435.9,253.1 436.2,251.1 436.5,251.7 436.8,253.1 437.1,252.7 437.4,252.5 437.7,251.9 438.0,251.3 438.3,252.3 438.6,251.1 438.9,251.3 439.2,251.7 439.5,250.9 439.8,251.8 440.1,252.7 440.4,252.4 440.7,252.0 441.0,252.3 441.3,251.9 441.6,251.2 441.9,252.2 442.2,251.8 442.5,252.6 442.8,252.9 443.1,251.8 443.4,252.2 443.7,252.6 444.0,251.8 444.3,251.4 444.6,252.5 444.9,252.9 445.2,252.6 445.5,252.5 445.8,252.8 446.1,252.4 446.4,252.3 446.7,251.9 447.0,251.6 447.3,252.3 447.6,251.1 447.9,251.8 448.2,252.6 448.5,252.5 448.8,252.3 449.1,251.4 449.4,251.8 449.7,251.9 450.0,252.3 450.3,251.8 450.6,252.4 450.9,253.0 451.2,251.3 451.5,252.4 451.8,252.6 452.1,251.7 452.4,252.0 452.7,253.1 453.0,250.9 453.3,252.1 453.6,251.2 453.9,252.6 454.2,253.0 454.5,252.0 454.8,251.1 455.1,252.2 455.4,252.1 455.7,252.5 456.0,252.0 456.3,252.3 456.6,252.8 456.9,252.0 457.2,251.8 457.5,253.0 457.8,251.3 458.1,252.4 458.4,251.8 458.7,252.6 459.0,251.1 459.3,253.1 459.6,251.7 459.9,251.0 460.2,251.5 460.5,251.8 460.8,250.9 461.1,251.8 461.4,251.8 461.7,252.5 462.0,251.7 462.3,251.5 462.6,251.4 462.9,252.6 463.2,253.0 463.5,252.1 463.8,251.4 464.1,252.7 464.4,251.8 464.7,251.3 465.0,251.1 465.3,252.6 465.6,252.7 465.9,252.3 466.2,251.9 466.5,252.1 466.8,251.4 467.1,253.1 467.4,251.7 467.7,252.3 468.0,252.7 468.3,252.7 468.6,251.9 468.9,251.5 469.2,252.1 469.5,251.1 469.8,252.8 470.1,251.7 470.4,252.8 470.7,251.5 471.0,251.7 471.3,251.4 471.6,251.8 471.9,251.3 472.2,250.9 472.5,252.5 472.8,251.5 473.1,251.4 473.4,251.5 473.7,252.0 474.0,251.8 474.3,252.3 474.6,252.4 474.9,251.7 475.2,253.0 475.5,252.8 475.8,251.0 476.1,252.8 476.4,252.9 476.7,252.7 477.0,251.2 477.3,252.8 477.6,252.3 477.9,250.9 478.2,250.9 478.5,253.0 478.8,252.4 479.1,251.4 479.4,251.1 479.7,251.2 480.0,251.4 480.3,252.6 480.6,251.6 480.9,251.2 481.2,252.9 481.5,252.7 481.8,251.2 482.1,252.9 482.4,252.2 482.7,252.6 483.0,252.4 483.3,252.9 483.6,252.7 483.9,252.8 484.2,251.4 484.5,252.7 484.8,252.6 485.1,253.2 485.4,252.7 485.7,253.9 486.0,253.3 486.3,252.8 486.6,253.1 486.9,253.4 487.2,254.8 487.5,254.3 487.8,255.8 488.1,255.6 488.4,256.9 488.7,257.5 489.0,259.0 489.3,261.1 489.6,260.5 489.9,263.8 490.2,264.3 490.5,265.9 490.8,267.5 491.1,269.3 491.4,269.6 491.7,271.1 492.0,273.7 492.3,273.0 492.6,275.5 492.9,276.8 493.2,276.6 493.5,279.1 493.8,280.5 494.1,282.3 494.4,282.1 494.7,284.9 495.0,285.0 495.3,286.2 495.6,288.3 495.9,287.6 496.2,290.3 496.5,291.4 496.8,291.9 497.1,294.3 497.4,294.4 497.7,295.9 498.0,297.2 498.3,299.0 498.6,298.9 498.9,300.7 499.2,301.9 499.5,303.5 499.8,305.4 500.1,305.4 500.4,307.9 500.7,308.2 501.0,309.7 501.3,310.4 501.6,312.2 501.9,314.6 502.2,315.1 502.5,316.7 502.8,316.9 503.1,318.1 503.4,319.3 503.7,321.3 504.0,322.6 504.3,324.2 504.6,323.8 504.9,326.6 505.2,328.3 505.5,328.7 505.8,328.9 506.1,330.7 506.4,331.2 506.7,332.8 507.0,335.6 507.3,336.0 507.6,337.3 507.9,338.7 508.2,340.1 508.5,340.5 508.8,341.7 509.1,342.8 509.4,344.1 509.7,345.0 510.0,346.4 510.3,346.4 510.6,348.6 510.9,349.2 511.2,351.1 511.5,350.7 511.8,352.0 512.1,352.8 512.4,355.6 512.7,357.1 513.0,357.6 513.3,358.1 513.6,360.2 513.9,361.3 514.2,362.0 514.5,362.7 514.8,364.1 515.1,365.7 515.4,366.8 515.7,368.4 516.0,370.3 516.3,372.3 516.6,371.6 516.9,374.1 517.2,374.3 517.5,375.8 517.8,378.7 518.1,379.5 518.4,381.6 518.7,381.9 519.0,382.3 519.3,384.5 519.6,386.3 519.9,388.4 520.2,389.8 520.5,390.0 520.8,391.2 521.1,391.8 521.4,394.4 521.7,394.6 522.0,395.4 522.3,395.9 522.6,396.8 522.9,399.2 523.2,398.8 523.5,401.6 523.8,400.5 524.1,403.1 524.4,402.1 524.7,402.6 525.0,405.0 525.3,404.7 525.6,406.5 525.9,406.0 526.2,406.2 526.5,408.1 526.8,408.3 527.1,408.9 527.4,408.9 527.7,407.7 528.0,409.3 528.3,409.8 528.6,409.5 528.9,410.9 529.2,409.5 529.5,411.2 529.8,410.7 530.1,409.2 530.4,409.3 530.7,410.8 531.0,411.3 531.3,409.7 531.6,410.3 531.9,411.4 532.2,410.2 532.5,411.9 532.8,411.1 533.1,410.2 533.4,411.0 533.7,411.5 534.0,411.3 534.3,411.8 534.6,410.6 534.9,412.1 535.2,411.1 535.5,411.7 535.8,411.7 536.1,411.2 536.4,411.1 536.7,412.1 537.0,412.4 537.3,412.1 537.6,411.6 537.9,410.9 538.2,410.4 538.5,412.5 538.8,411.9 539.1,412.2 539.4,411.0 539.7,411.6 540.0,412.5 540.3,412.2 540.6,411.6 540.9,411.0 541.2,411.2 541.5,412.3 541.8,411.1 542.1,411.8 542.4,411.6 542.7,412.3 543.0,412.1 543.3,410.9 543.6,410.3 543.9,410.9 544.2,411.2 544.5,411.6 544.8,412.1 545.1,412.3 545.4,410.3 545.7,412.2 546.0,412.1 546.3,412.2 546.6,411.6 546.9,410.9 547.2,412.2 547.5,412.1 547.8,411.8 548.1,412.4 548.4,411.0 548.7,410.4 549.0,411.5 549.3,412.1 549.6,410.7 549.9,412.0 550.2,412.4 550.5,410.8 550.8,411.6 551.1,411.8 551.4,411.3 551.7,410.7 552.0,410.8 552.3,412.0 552.6,412.1 552.9,411.3 553.2,410.5 553.5,412.1 553.8,412.0 554.1,410.8 554.4,411.6 554.7,412.3 555.0,412.3 555.3,411.5 555.6,411.3 555.9,411.6 556.2,410.7 556.5,410.7 556.8,410.7 557.1,411.9 557.4,411.1 557.7,411.5 558.0,411.2 558.3,411.4 558.6,410.6 558.9,410.4 559.2,412.5 559.5,411.1 559.8,410.5 560.1,411.7 560.4,412.1 560.7,410.6 561.0,411.6 561.3,411.0 561.6,411.4 561.9,410.3 562.2,410.3 562.5,412.5 562.8,412.2 563.1,411.4 563.4,411.6 563.7,410.9 564.0,412.0 564.3,411.2 564.6,412.4 564.9,412.0 565.2,412.1 565.5,412.5 565.8,410.8 566.1,410.3 566.4,410.7 566.7,410.7 567.0,410.4 567.3,410.4 567.6,411.5 567.9,412.3 568.2,411.3 568.5,412.4 568.8,412.3 569.1,410.4 569.4,411.6 569.7,411.2 570.0,410.5 570.3,412.5 570.6,410.8 570.9,411.5 571.2,411.7 571.5,412.4 571.8,411.8 572.1,411.2 572.4,411.3 572.7,410.6 573.0,412.5 573.3,412.5 573.6,410.8 573.9,410.3 574.2,410.8 574.5,411.1 574.8,412.3 575.1,412.3 575.4,412.2 575.7,410.4 576.0,412.1 576.3,411.9 576.6,411.7 576.9,412.5 577.2,410.4 577.5,410.6 577.8,412.0 578.1,412.4 578.4,411.8 578.7,410.9 579.0,411.6 579.3,412.0 579.6,410.5 579.9,411.0 580.2,410.8 580.5,410.5 580.8,411.4 581.1,410.6 581.4,410.8 581.7,410.6 582.0,411.8 582.3,410.3 582.6,411.9 582.9,410.7 583.2,410.3 583.5,412.4 583.8,410.8 584.1,412.4 584.4,412.2 584.7,412.3 585.0,410.6 585.3,411.3 585.6,410.5 585.9,412.4 586.2,412.2 586.5,411.7 586.8,411.3 587.1,411.0 587.4,412.1 587.7,411.3 588.0,411.7 588.3,410.6 588.6,410.8 588.9,410.4 589.2,411.9 589.5,411.5 589.8,410.6 590.1,412.3 590.4,410.9 590.7,411.2 591.0,410.6 591.3,410.9 591.6,412.2 591.9,411.0 592.2,410.6 592.5,411.4 592.8,411.0 593.1,412.3 593.4,410.5 593.7,412.5 594.0,410.4 594.3,412.3 594.6,411.8 594.9,410.7 595.2,411.3 595.5,410.9 595.8,410.8 596.1,410.7 596.4,411.1 596.7,412.5 597.0,412.5 597.3,412.4 597.6,410.5 597.9,410.9 598.2,412.3 598.5,410.4 598.8,411.9 599.1,410.9 599.4,412.5 599.7,410.3 600.0,412.1 600.3,411.0 600.6,410.6 600.9,410.3 601.2,412.2 601.5,411.5 601.8,410.7 602.1,411.3 602.4,412.3 602.7,410.8 603.0,411.6 603.3,410.6 603.6,410.7 603.9,412.0 604.2,411.9 604.5,410.7 604.8,410.4 605.1,410.5 605.4,411.6 605.7,411.4 606.0,410.9 606.3,410.7 606.6,411.7 606.9,411.9 607.2,412.1 607.5,411.6 607.8,410.7 608.1,410.4 608.4,411.9 608.7,411.2 609.0,411.9 609.3,410.4 609.6,412.1 609.9,411.0 610.2,412.2 610.5,412.2 610.8,411.4 611.1,410.3 611.4,412.3 611.7,411.3 612.0,412.3 612.3,410.9 612.6,410.7 612.9,412.2 613.2,411.1 613.5,410.6 613.8,411.1 614.1,411.6 614.4,410.3 614.7,411.4 615.0,411.3 615.3,411.4 615.6,410.5 615.9,411.9 616.2,412.1 616.5,412.2 616.8,411.0 617.1,411.9 617.4,411.1 617.7,412.0 618.0,410.4 618.3,412.3 618.6,412.4 618.9,411.4 619.2,411.4 619.5,411.5 619.8,411.5 620.1,410.3 620.4,412.5 620.7,410.8 621.0,410.7 621.3,410.5 621.6,410.8 621.9,412.1 622.2,410.3 622.5,410.5 622.8,411.9 623.1,410.7 623.4,410.3 623.7,411.6 624.0,411.6 624.3,411.5 624.6,411.9 624.9,410.5 625.2,412.2 625.5,411.9 625.8,410.4 626.1,410.5 626.4,411.4 626.7,411.4 627.0,410.9 627.3,410.5 627.6,411.2 627.9,410.6 628.2,411.6 628.5,412.2 628.8,410.6 629.1,411.6 629.4,412.0 629.7,410.6 630.0,412.1 630.3,412.4 630.6,411.1 630.9,411.2 631.2,412.2 631.5,411.5 631.8,411.2 632.1,412.4 632.4,412.0 632.7,411.0 633.0,410.8 633.3,411.0 633.6,411.3 633.9,412.5 634.2,412.1 634.5,412.3 634.8,412.1 635.1,412.2 635.4,410.4 635.7,411.4 636.0,412.5 636.3,412.4 636.6,410.8 636.9,411.2 637.2,411.7 637.5,411.1 637.8,411.5 638.1,410.4 638.4,411.2 638.7,411.4 639.0,410.3 639.3,410.6 639.6,412.5 639.9,412.0 640.2,412.4 640.5,411.7 640.8,412.1 641.1,412.3 641.4,412.3 641.7,410.3 642.0,411.7 642.3,410.9 642.6,411.8 642.9,410.9 643.2,411.5 643.5,412.4 643.8,411.7 644.1,410.8 644.4,411.4 644.7,411.2 645.0,412.4 645.3,410.9 645.6,411.0 645.9,411.7 646.2,410.5 646.5,411.6 646.8,412.4 647.1,411.4 647.4,410.9 647.7,411.3 648.0,411.5 648.3,410.6 648.6,410.5 648.9,410.6 649.2,410.9 649.5,411.2 649.8,410.9 650.1,410.8 650.4,410.5 650.7,411.5 651.0,412.2 651.3,411.7 651.6,411.6 651.9,411.7 652.2,410.7 652.5,411.9 652.8,411.3 653.1,411.5 653.4,411.7 653.7,411.3 654.0,411.0 654.3,410.8 654.6,410.8 654.9,411.4 655.2,411.1 655.5,411.6 655.8,410.3 656.1,411.1 656.4,412.2 656.7,410.8 657.0,411.5 657.3,411.4 657.6,410.9 657.9,412.5 658.2,410.9 658.5,412.0 658.8,410.6 659.1,410.4 659.4,412.3 659.7,411.3 660.0,410.4 660.3,411.1 660.6,411.3 660.9,411.9 661.2,410.5 661.5,410.8 661.8,412.5 662.1,411.9 662.4,410.6 662.7,411.0 663.0,411.1 663.3,411.8 663.6,411.7 663.9,412.2 664.2,412.1 664.5,411.4 664.8,411.9 665.1,412.0 665.4,412.0 665.7,411.3 666.0,412.1 666.3,411.9 666.6,412.4 666.9,410.5 667.2,412.3 667.5,410.3 667.8,412.0 668.1,411.6 668.4,411.4 668.7,412.5 669.0,411.6 669.3,411.2 669.6,412.1 669.9,412.3 670.2,411.6 670.5,411.1 670.8,411.3 671.1,411.3 671.4,411.9 671.7,410.9 672.0,411.1 672.3,411.5 672.6,411.1 672.9,411.0 673.2,412.1 673.5,412.2 673.8,411.4 674.1,411.3 674.4,410.7 674.7,410.9 675.0,410.6 675.3,411.6 675.6,411.6 675.9,410.5 676.2,412.4 676.5,411.0 676.8,412.2 677.1,412.2 677.4,412.5 677.7,410.7 678.0,411.2 678.3,412.3 678.6,410.3 678.9,410.4 679.2,411.5 679.5,411.4 679.8,412.4 680.1,412.0 680.4,411.5 680.7,412.5 681.0,411.4 681.3,411.4 681.6,411.8 681.9,411.1 682.2,411.1 682.5,411.6 682.8,411.1 683.1,412.4 683.4,411.8 683.7,411.5 684.0,410.5 684.3,411.1 684.6,411.2 684.9,411.5 685.2,411.6 685.5,412.3 685.8,412.1 686.1,410.4 686.4,409.8 686.7,409.6 687.0,409.9 687.3,407.9 687.6,407.7 687.9,407.8 688.2,405.8 688.5,405.6 688.8,406.1 689.1,403.8 689.4,401.1 689.7,398.3 690.0,398.2 690.3,395.8 690.6,394.1 690.9,392.6 691.2,390.4 691.5,387.4 691.8,384.9 692.1,384.0 692.4,383.3 692.7,382.1 693.0,380.1 693.3,378.9 693.6,378.7 693.9,377.5 694.2,375.7 694.5,375.9 694.8,373.9 695.1,371.3 695.4,371.0 695.7,370.6 696.0,368.3 696.3,368.0 696.6,365.2 696.9,364.6 697.2,364.7 697.5,362.9 697.8,361.8 698.1,359.6 698.4,359.0 698.7,358.0 699.0,356.1 699.3,355.7 699.6,354.4 699.9,354.4 700.2,352.4 700.5,351.0 700.8,349.3 701.1,348.3 701.4,348.7 701.7,346.1 702.0,345.1 702.3,344.2 702.6,344.0 702.9,343.6 703.2,342.1 703.5,341.5 703.8,338.8 704.1,337.6 704.4,338.3 704.7,336.3 705.0,336.1 705.3,334.3 705.6,332.8 705.9,332.0 706.2,330.6 706.5,331.3 706.8,329.1 707.1,327.2 707.4,326.0 707.7,324.5 708.0,322.3 708.3,322.8 708.6,320.7 708.9,320.2 709.2,317.6 709.5,316.6 709.8,314.4 710.1,312.5 710.4,313.1 710.7,311.5 711.0,308.9 711.3,308.9 711.6,307.3 711.9,304.7 712.2,304.0 712.5,303.4 712.8,300.9 713.1,300.6 713.4,297.6 713.7,296.6 714.0,296.0 714.3,293.4 714.6,292.3 714.9,292.2 715.2,290.0 715.5,289.3 715.8,286.7 716.1,285.1 716.4,284.2 716.7,282.4 717.0,282.9 717.3,280.0 717.6,279.2 717.9,276.8 718.2,276.4 718.5,274.7 718.8,273.4 719.1,271.2 719.4,270.0 719.7,270.2 720.0,267.8 720.3,266.1 720.6,264.6 720.9,263.5 721.2,262.0 721.5,260.1 721.8,260.2 722.1,258.1 722.4,256.5 722.7,257.3 723.0,255.3 723.3,255.2 723.6,256.0 723.9,253.8 724.2,254.2 724.5,254.8 724.8,254.5 725.1,252.8 725.4,253.0 725.7,253.6 726.0,252.5 726.3,253.8 726.6,252.0 726.9,253.6 727.2,252.5 727.5,251.8 727.8,252.2 728.1,251.4 728.4,252.6 728.7,251.5 729.0,253.0 729.3,252.3 729.6,251.8 729.9,251.5 730.2,252.3 730.5,251.4 730.8,253.0 731.1,251.2 731.4,252.1 731.7,252.2 732.0,251.6 732.3,252.7 732.6,251.8 732.9,252.5 733.2,252.2 733.5,251.7 733.8,251.8 734.1,251.1 734.4,251.3 734.7,252.9 735.0,251.7 735.3,252.5 735.6,251.2 735.9,252.2 736.2,251.8 736.5,252.1 736.8,251.6 737.1,251.1 737.4,251.6 737.7,251.5 738.0,251.2 738.3,252.6 738.6,251.6 738.9,251.9 739.2,253.0 739.5,252.7 739.8,253.0 740.1,252.9 740.4,251.2 740.7,251.6 741.0,251.0 741.3,252.5 741.6,252.4 741.9,251.7 742.2,251.9 742.5,252.4 742.8,252.5 743.1,251.5 743.4,252.9 743.7,251.7 744.0,252.4 744.3,251.3 744.6,251.2 744.9,253.0 745.2,252.6 745.5,252.6 745.8,251.0 746.1,251.0 746.4,251.3 746.7,251.4 747.0,251.6 747.3,251.8 747.6,251.0 747.9,251.6 748.2,252.4 748.5,251.3 748.8,252.8 749.1,252.2 749.4,252.6 749.7,251.5 750.0,251.9 750.3,252.5 750.6,251.7 750.9,250.9 751.2,252.8 751.5,252.7 751.8,251.6 752.1,251.0 752.4,252.9 752.7,252.3 753.0,251.0 753.3,251.5 753.6,251.2 753.9,252.7 754.2,251.4 754.5,253.0 754.8,252.6 755.1,251.1 755.4,252.5 755.7,251.8 756.0,252.6 756.3,252.8 756.6,251.5 756.9,251.1 757.2,253.1 757.5,251.9 757.8,253.0 758.1,252.5 758.4,252.6 758.7,252.8 759.0,252.3 759.3,251.9 759.6,251.0 759.9,252.5 760.2,251.9 760.5,252.1 760.8,253.0 761.1,251.2 761.4,252.6 761.7,251.0 762.0,252.5 762.3,252.7 762.6,251.5 762.9,252.1 763.2,253.1 763.5,252.3 763.8,252.1 764.1,251.5 764.4,251.0 764.7,251.7 765.0,251.8 765.3,251.3 765.6,251.6 765.9,251.2 766.2,252.5 766.5,252.4 766.8,251.4 767.1,251.4 767.4,252.1 767.7,251.9 768.0,253.0 768.3,251.7 768.6,251.6 768.9,252.9 769.2,251.2 769.5,252.2 769.8,251.6 770.1,252.7 770.4,252.1 770.7,252.6 771.0,251.3 771.3,252.4 771.6,252.2 771.9,251.9 772.2,252.6 772.5,252.8 772.8,251.1 773.1,251.5 773.4,251.7 773.7,251.3 774.0,251.0 774.3,251.5 774.6,251.3 774.9,252.5 775.2,251.9 775.5,251.1 775.8,251.6 776.1,251.9 776.4,251.7 776.7,251.2 777.0,251.0 777.3,250.9 777.6,253.1" fill="none" stroke="#f01c26" stroke-width="1.7" stroke-linejoin="round"/>
  <path d="M42.0 410.8L81.0 410.8M124.7 351.0L137.0 344.5L146.0 341.5L156.7 332.3M167.4 320.7L176.0 319.8L190.0 319.0L199.0 318.6L201.5 317.0L230.0 316.8L340.0 316.8L343.0 318.5M369.0 408.0L373.5 410.5L484.4 410.8L487.0 409.0M525.0 252.5L527.7 250.8L532.0 249.9L683.0 249.9L685.0 251.0M726.5 408.0L730.0 410.5L735.0 411.0L777.6 411.0" fill="none" stroke="#0000fa" stroke-width="3.3" stroke-linejoin="round" stroke-linecap="butt" shape-rendering="crispEdges"/>
  <path d="M81.0 410.8L84.0 408.0L86.5 402.5L92.6 390.0L103.0 379.6L110.0 369.0L116.4 359.8L124.7 351.0M156.7 332.3L163.0 325.0L167.4 320.7M343.0 318.5L345.4 321.6M365.9 404.0L369.0 408.0M487.0 409.0L489.5 404.0M523.0 256.0L525.0 252.5M685.0 251.0L687.0 253.5M723.8 404.0L726.5 408.0" fill="none" stroke="#0000fa" stroke-width="2.7" stroke-linejoin="round" stroke-linecap="round"/>
  <polyline points="42.0,411.4 42.3,409.8 42.6,411.3 42.9,411.9 43.2,410.9 43.5,409.9 43.8,410.8 44.1,410.6 44.4,410.1 44.7,410.9 45.0,409.7 45.3,411.8 45.6,411.1 45.9,411.1 46.2,411.8 46.5,411.2 46.8,410.2 47.1,410.2 47.4,410.0 47.7,409.7 48.0,411.4 48.3,411.6 48.6,410.3 48.9,410.1 49.2,411.1 49.5,411.6 49.8,411.8 50.1,410.0 50.4,411.5 50.7,411.6 51.0,411.4 51.3,410.4 51.6,410.1 51.9,411.5 52.2,410.4 52.5,410.5 52.8,410.9 53.1,410.5 53.4,411.6 53.7,410.2 54.0,409.7 54.3,411.0 54.6,411.1 54.9,411.5 55.2,411.3 55.5,411.7 55.8,411.8 56.1,410.8 56.4,410.8 56.7,410.0 57.0,410.3 57.3,411.0 57.6,409.8 57.9,411.2 58.2,410.0 58.5,410.7 58.8,411.9 59.1,409.9 59.4,409.7 59.7,410.7 60.0,410.1 60.3,411.3 60.6,409.7 60.9,411.6 61.2,411.6 61.5,411.5 61.8,410.6 62.1,410.3 62.4,411.2 62.7,410.8 63.0,410.6 63.3,410.4 63.6,410.7 63.9,411.2 64.2,411.5 64.5,411.7 64.8,410.0 65.1,410.3 65.4,410.7 65.7,410.9 66.0,410.5 66.3,410.1 66.6,409.8 66.9,410.4 67.2,410.7 67.5,411.9 67.8,411.7 68.1,411.6 68.4,411.9 68.7,411.9 69.0,411.1 69.3,411.5 69.6,409.8 69.9,411.2 70.2,411.1 70.5,410.3 70.8,411.0 71.1,411.8 71.4,410.8 71.7,411.1 72.0,410.3 72.3,410.4 72.6,411.7 72.9,409.7 73.2,410.1 73.5,411.2 73.8,410.7 74.1,409.8 74.4,411.2 74.7,410.5 75.0,411.0 75.3,410.6 75.6,410.9 75.9,410.9 76.2,410.6 76.5,409.9 76.8,410.1 77.1,411.7 77.4,410.9 77.7,409.9 78.0,411.6 78.3,410.2 78.6,409.9 78.9,410.9 79.2,410.2 79.5,410.8 79.8,410.9 80.1,410.2 80.4,411.0 80.7,409.9 81.0,410.8 81.3,410.7 81.6,409.3 81.9,409.7 82.2,408.7 82.5,409.3 82.8,410.0 83.1,409.0 83.4,409.1 83.7,408.9 84.0,407.1 84.3,408.5 84.6,407.2 84.9,405.1 85.2,406.1 85.5,404.5 85.8,403.3 86.1,404.4 86.4,402.9 86.7,402.7 87.0,400.6 87.3,401.5 87.6,399.2 87.9,399.0 88.2,398.7 88.5,397.3 88.8,398.0 89.1,396.5 89.4,396.1 89.7,396.4 90.0,395.2 90.3,395.6 90.6,394.4 90.9,394.3 91.2,393.0 91.5,393.2 91.8,392.5 92.1,390.3 92.4,391.0 92.7,389.5 93.0,390.2 93.3,389.7 93.6,389.7 93.9,387.8 94.2,388.1 94.5,388.6 94.8,388.8 95.1,388.0 95.4,386.2 95.7,387.1 96.0,385.7 96.3,386.4 96.6,386.7 96.9,384.8 97.2,386.4 97.5,385.5 97.8,384.2 98.1,383.8 98.4,384.1 98.7,384.7 99.0,383.8 99.3,382.4 99.6,381.9 99.9,381.8 100.2,383.1 100.5,381.4 100.8,381.9 101.1,381.0 101.4,381.6 101.7,380.6 102.0,379.8 102.3,381.2 102.6,380.1 102.9,380.1 103.2,380.0 103.5,379.9 103.8,377.3 104.1,377.6 104.4,376.7 104.7,377.0 105.0,377.4 105.3,376.8 105.6,374.6 105.9,374.5 106.2,375.5 106.5,374.7 106.8,373.6 107.1,373.3 107.4,372.2 107.7,373.3 108.0,371.8 108.3,372.4 108.6,371.4 108.9,369.7 109.2,369.8 109.5,369.1 109.8,370.2 110.1,369.1 110.4,367.4 110.7,367.2 111.0,367.2 111.3,367.1 111.6,366.9 111.9,366.0 112.2,365.5 112.5,364.3 112.8,365.2 113.1,364.2 113.4,363.0 113.7,363.6 114.0,364.4 114.3,361.8 114.6,361.6 114.9,362.3 115.2,361.0 115.5,360.6 115.8,360.7 116.1,359.7 116.4,360.0 116.7,359.5 117.0,360.2 117.3,360.0 117.6,357.5 117.9,358.3 118.2,358.5 118.5,358.4 118.8,357.9 119.1,357.2 119.4,356.9 119.7,356.0 120.0,355.5 120.3,356.3 120.6,356.2 120.9,356.0 121.2,355.1 121.5,353.9 121.8,354.7 122.1,354.3 122.4,353.5 122.7,353.4 123.0,352.5 123.3,352.6 123.6,351.9 123.9,350.8 124.2,351.2 124.5,350.8 124.8,352.1 125.1,350.7 125.4,350.3 125.7,349.9 126.0,349.7 126.3,349.8 126.6,349.2 126.9,348.7 127.2,350.5 127.5,349.4 127.8,349.2 128.1,349.4 128.4,348.6 128.7,348.1 129.0,347.7 129.3,348.1 129.6,348.0 129.9,348.8 130.2,348.2 130.5,348.9 130.8,347.4 131.1,348.6 131.4,347.7 131.7,346.3 132.0,346.4 132.3,347.2 132.6,347.9 132.9,346.3 133.2,347.1 133.5,346.2 133.8,347.0 134.1,345.0 134.4,345.8 134.7,346.6 135.0,345.0 135.3,344.8 135.6,344.1 135.9,344.3 136.2,344.4 136.5,345.2 136.8,344.0 137.1,344.2 137.4,343.7 137.7,344.5 138.0,345.0 138.3,344.4 138.6,343.3 138.9,344.4 139.2,344.8 139.5,343.9 139.8,342.6 140.1,344.2 140.4,344.2 140.7,342.9 141.0,342.3 141.3,342.3 141.6,343.1 141.9,343.7 142.2,343.1 142.5,343.6 142.8,341.9 143.1,342.1 143.4,342.9 143.7,342.6 144.0,341.9 144.3,342.5 144.6,341.6 144.9,340.8 145.2,341.6 145.5,340.6 145.8,341.9 146.1,341.0 146.4,341.1 146.7,341.1 147.0,340.1 147.3,340.3 147.6,339.0 147.9,340.8 148.2,339.8 148.5,340.5 148.8,338.1 149.1,339.1 149.4,339.1 149.7,337.9 150.0,337.1 150.3,337.0 150.6,336.7 150.9,337.9 151.2,336.1 151.5,337.5 151.8,336.3 152.1,336.3 152.4,336.2 152.7,335.9 153.0,335.8 153.3,335.5 153.6,334.6 153.9,335.3 154.2,333.9 154.5,334.7 154.8,334.5 155.1,334.3 155.4,333.0 155.7,333.8 156.0,334.0 156.3,332.5 156.6,331.9 156.9,332.1 157.2,332.7 157.5,330.5 157.8,329.9 158.1,330.6 158.4,330.7 158.7,330.6 159.0,329.3 159.3,330.4 159.6,328.3 159.9,329.2 160.2,327.3 160.5,326.8 160.8,326.7 161.1,326.2 161.4,326.9 161.7,326.6 162.0,325.4 162.3,326.8 162.6,325.2 162.9,324.3 163.2,324.1 163.5,325.1 163.8,325.2 164.1,323.1 164.4,322.5 164.7,324.0 165.0,322.5 165.3,323.9 165.6,322.5 165.9,322.5 166.2,321.5 166.5,322.3 166.8,321.2 167.1,320.6 167.4,321.6 167.7,319.8 168.0,321.2 168.3,319.6 168.6,320.9 168.9,320.3 169.2,321.3 169.5,319.5 169.8,320.6 170.1,320.2 170.4,321.4 170.7,321.4 171.0,320.6 171.3,319.7 171.6,319.7 171.9,319.7 172.2,320.0 172.5,319.5 172.8,319.5 173.1,320.7 173.4,320.4 173.7,319.6 174.0,321.1 174.3,319.3 174.6,320.1 174.9,319.1 175.2,320.7 175.5,320.7 175.8,319.3 176.1,320.4 176.4,320.5 176.7,319.3 177.0,319.4 177.3,319.7 177.6,320.6 177.9,318.9 178.2,320.1 178.5,319.9 178.8,319.5 179.1,319.8 179.4,320.5 179.7,318.9 180.0,320.5 180.3,319.2 180.6,320.2 180.9,320.4 181.2,318.8 181.5,320.3 181.8,320.6 182.1,319.0 182.4,318.3 182.7,318.5 183.0,320.5 183.3,318.3 183.6,320.3 183.9,318.5 184.2,319.9 184.5,318.4 184.8,318.5 185.1,319.7 185.4,318.3 185.7,318.9 186.0,320.2 186.3,319.7 186.6,320.1 186.9,320.3 187.2,318.1 187.5,318.5 187.8,319.8 188.1,319.5 188.4,318.0 188.7,319.1 189.0,318.4 189.3,318.9 189.6,318.1 189.9,317.9 190.2,320.1 190.5,318.6 190.8,319.8 191.1,318.1 191.4,318.9 191.7,318.1 192.0,318.7 192.3,318.2 192.6,319.3 192.9,318.1 193.2,319.4 193.5,318.8 193.8,317.9 194.1,318.5 194.4,318.8 194.7,319.8 195.0,318.4 195.3,318.1 195.6,319.8 195.9,319.6 196.2,319.3 196.5,318.2 196.8,318.0 197.1,318.1 197.4,317.7 197.7,317.6 198.0,318.7 198.3,318.4 198.6,318.7 198.9,318.3 199.2,317.3 199.5,318.7 199.8,318.4 200.1,318.0 200.4,317.8 200.7,317.9 201.0,318.4 201.3,318.0 201.6,317.5 201.9,316.8 202.2,316.6 202.5,316.8 202.8,318.1 203.1,316.7 203.4,316.7 203.7,316.8 204.0,316.2 204.3,318.1 204.6,315.8 204.9,317.2 205.2,318.0 205.5,316.4 205.8,317.2 206.1,316.7 206.4,316.4 206.7,316.3 207.0,316.1 207.3,317.7 207.6,317.6 207.9,317.9 208.2,315.9 208.5,317.4 208.8,316.5 209.1,317.3 209.4,317.1 209.7,316.5 210.0,318.0 210.3,315.8 210.6,317.5 210.9,317.7 211.2,317.0 211.5,317.1 211.8,318.1 212.1,316.3 212.4,317.2 212.7,317.5 213.0,316.6 213.3,317.4 213.6,316.7 213.9,317.0 214.2,317.2 214.5,317.3 214.8,316.5 215.1,317.2 215.4,317.0 215.7,316.3 216.0,317.2 216.3,316.4 216.6,317.8 216.9,316.8 217.2,317.4 217.5,316.9 217.8,316.8 218.1,316.2 218.4,316.1 218.7,317.9 219.0,316.9 219.3,316.9 219.6,316.9 219.9,317.6 220.2,316.3 220.5,316.1 220.8,317.6 221.1,316.8 221.4,317.2 221.7,317.6 222.0,317.8 222.3,317.7 222.6,315.8 222.9,316.6 223.2,317.6 223.5,317.6 223.8,316.0 224.1,316.0 224.4,316.3 224.7,315.9 225.0,316.5 225.3,317.5 225.6,316.9 225.9,316.7 226.2,315.9 226.5,316.6 226.8,318.0 227.1,317.3 227.4,316.7 227.7,316.8 228.0,317.5 228.3,317.4 228.6,316.0 228.9,317.2 229.2,316.5 229.5,316.9 229.8,316.2 230.1,316.5 230.4,316.4 230.7,316.5 231.0,315.7 231.3,316.1 231.6,317.0 231.9,315.8 232.2,316.1 232.5,317.3 232.8,316.3 233.1,316.4 233.4,316.2 233.7,317.6 234.0,315.9 234.3,317.1 234.6,317.6 234.9,316.1 235.2,316.6 235.5,317.5 235.8,317.1 236.1,316.5 236.4,315.8 236.7,316.7 237.0,316.5 237.3,317.3 237.6,316.3 237.9,316.6 238.2,317.1 238.5,317.5 238.8,316.5 239.1,316.5 239.4,317.0 239.7,317.8 240.0,316.1 240.3,317.9 240.6,317.3 240.9,316.5 241.2,317.2 241.5,316.4 241.8,315.8 242.1,317.4 242.4,316.5 242.7,316.9 243.0,316.8 243.3,317.7 243.6,317.4 243.9,315.7 244.2,317.0 244.5,316.7 244.8,316.7 245.1,317.6 245.4,316.6 245.7,316.7 246.0,317.7 246.3,316.7 246.6,316.8 246.9,316.8 247.2,317.5 247.5,317.2 247.8,317.4 248.1,316.6 248.4,315.7 248.7,317.2 249.0,316.9 249.3,317.4 249.6,317.4 249.9,315.9 250.2,316.2 250.5,315.8 250.8,317.5 251.1,315.9 251.4,315.9 251.7,317.4 252.0,316.9 252.3,315.8 252.6,317.2 252.9,317.3 253.2,316.8 253.5,315.8 253.8,317.2 254.1,316.6 254.4,317.0 254.7,317.9 255.0,317.5 255.3,317.7 255.6,316.0 255.9,316.4 256.2,316.8 256.5,315.7 256.8,317.9 257.1,316.3 257.4,316.3 257.7,316.4 258.0,316.2 258.3,317.6 258.6,316.9 258.9,316.8 259.2,316.6 259.5,315.8 259.8,316.4 260.1,317.6 260.4,317.5 260.7,317.6 261.0,316.2 261.3,316.1 261.6,315.8 261.9,316.9 262.2,316.5 262.5,316.7 262.8,316.8 263.1,317.0 263.4,316.5 263.7,317.5 264.0,316.1 264.3,317.8 264.6,316.9 264.9,315.8 265.2,316.4 265.5,316.9 265.8,316.6 266.1,316.9 266.4,316.4 266.7,316.3 267.0,317.5 267.3,316.3 267.6,317.3 267.9,317.5 268.2,317.0 268.5,316.7 268.8,317.8 269.1,316.7 269.4,317.7 269.7,315.8 270.0,316.6 270.3,317.1 270.6,315.8 270.9,317.6 271.2,315.8 271.5,317.0 271.8,316.1 272.1,317.8 272.4,316.9 272.7,317.5 273.0,316.8 273.3,317.2 273.6,317.2 273.9,316.3 274.2,316.1 274.5,317.6 274.8,316.0 275.1,317.8 275.4,316.1 275.7,315.9 276.0,315.9 276.3,317.5 276.6,317.8 276.9,316.6 277.2,317.2 277.5,316.2 277.8,317.7 278.1,317.2 278.4,316.0 278.7,315.8 279.0,317.3 279.3,315.7 279.6,317.6 279.9,316.3 280.2,316.2 280.5,317.0 280.8,316.4 281.1,316.9 281.4,316.0 281.7,317.7 282.0,316.4 282.3,317.6 282.6,316.0 282.9,317.5 283.2,317.9 283.5,316.6 283.8,315.7 284.1,316.5 284.4,317.1 284.7,316.2 285.0,316.9 285.3,315.9 285.6,316.7 285.9,317.3 286.2,316.6 286.5,317.2 286.8,315.9 287.1,317.6 287.4,315.9 287.7,317.8 288.0,317.9 288.3,317.8 288.6,316.9 288.9,316.3 289.2,316.5 289.5,317.4 289.8,316.8 290.1,317.8 290.4,315.9 290.7,316.8 291.0,317.6 291.3,317.0 291.6,316.9 291.9,315.9 292.2,316.0 292.5,316.3 292.8,317.7 293.1,317.6 293.4,316.2 293.7,317.8 294.0,315.7 294.3,317.0 294.6,317.9 294.9,316.4 295.2,317.8 295.5,317.2 295.8,315.8 296.1,316.4 296.4,316.7 296.7,316.2 297.0,317.4 297.3,316.1 297.6,317.5 297.9,316.3 298.2,315.8 298.5,316.9 298.8,315.9 299.1,316.9 299.4,317.5 299.7,317.0 300.0,316.7 300.3,315.7 300.6,316.8 300.9,315.9 301.2,317.1 301.5,316.0 301.8,317.0 302.1,316.5 302.4,316.5 302.7,317.2 303.0,316.0 303.3,316.0 303.6,317.8 303.9,316.4 304.2,317.6 304.5,317.7 304.8,316.8 305.1,316.0 305.4,315.9 305.7,317.7 306.0,315.9 306.3,316.8 306.6,316.9 306.9,315.9 307.2,316.7 307.5,316.0 307.8,316.9 308.1,316.8 308.4,316.5 308.7,316.1 309.0,316.6 309.3,316.1 309.6,315.9 309.9,316.2 310.2,317.7 310.5,316.8 310.8,317.7 311.1,315.7 311.4,317.8 311.7,316.8 312.0,317.5 312.3,317.0 312.6,317.2 312.9,316.2 313.2,317.4 313.5,316.0 313.8,316.3 314.1,315.7 314.4,316.6 314.7,316.8 315.0,316.3 315.3,317.7 315.6,315.8 315.9,317.0 316.2,316.2 316.5,317.0 316.8,317.5 317.1,317.3 317.4,315.8 317.7,316.2 318.0,317.0 318.3,317.9 318.6,315.7 318.9,317.1 319.2,317.2 319.5,317.5 319.8,316.4 320.1,317.5 320.4,316.7 320.7,317.8 321.0,315.7 321.3,317.8 321.6,316.6 321.9,316.6 322.2,315.9 322.5,316.2 322.8,317.3 323.1,317.2 323.4,316.0 323.7,316.4 324.0,316.0 324.3,316.1 324.6,316.2 324.9,316.4 325.2,317.9 325.5,317.9 325.8,317.5 326.1,316.8 326.4,316.8 326.7,317.4 327.0,317.7 327.3,317.4 327.6,317.1 327.9,316.1 328.2,317.1 328.5,317.6 328.8,317.5 329.1,315.9 329.4,317.3 329.7,316.5 330.0,316.0 330.3,317.9 330.6,317.2 330.9,317.4 331.2,316.0 331.5,317.6 331.8,317.8 332.1,317.7 332.4,317.4 332.7,317.6 333.0,317.5 333.3,317.0 333.6,316.7 333.9,317.5 334.2,317.5 334.5,317.7 334.8,316.3 335.1,317.9 335.4,316.9 335.7,317.8 336.0,315.9 336.3,317.9 336.6,317.5 336.9,316.2 337.2,317.6 337.5,316.2 337.8,316.1 338.1,316.7 338.4,316.2 338.7,316.8 339.0,317.7 339.3,317.2 339.6,317.3 339.9,316.6 340.2,317.6 340.5,317.8 340.8,317.7 341.1,318.4 341.4,318.3 341.7,317.5 342.0,317.0 342.3,318.5 342.6,319.0 342.9,318.1 343.2,319.0 343.5,319.9 343.8,320.2 344.1,318.8 344.4,320.3 344.7,319.6 345.0,320.2 345.3,322.2 345.6,322.2 345.9,323.9 346.2,324.8 346.5,325.7 346.8,326.7 347.1,328.3 347.4,330.6 347.7,331.3 348.0,331.8 348.3,332.6 348.6,334.2 348.9,336.5 349.2,337.1 349.5,338.8 349.8,340.4 350.1,340.1 350.4,342.6 350.7,342.3 351.0,345.1 351.3,344.7 351.6,345.9 351.9,348.5 352.2,348.1 352.5,348.8 352.8,351.4 353.1,351.8 353.4,353.5 353.7,353.3 354.0,354.6 354.3,356.7 354.6,356.7 354.9,358.8 355.2,358.2 355.5,361.0 355.8,360.7 356.1,362.9 356.4,363.0 356.7,364.7 357.0,367.8 357.3,368.0 357.6,370.1 357.9,370.2 358.2,371.7 358.5,372.5 358.8,374.8 359.1,376.9 359.4,377.4 359.7,378.4 360.0,381.0 360.3,382.2 360.6,383.0 360.9,383.0 361.2,385.5 361.5,386.4 361.8,388.7 362.1,388.6 362.4,390.4 362.7,391.6 363.0,392.2 363.3,393.7 363.6,395.3 363.9,397.0 364.2,397.2 364.5,398.1 364.8,400.7 365.1,399.8 365.4,402.8 365.7,403.6 366.0,404.3 366.3,404.4 366.6,405.5 366.9,406.2 367.2,406.2 367.5,406.6 367.8,405.4 368.1,406.4 368.4,406.4 368.7,408.7 369.0,408.9 369.3,407.3 369.6,408.5 369.9,408.7 370.2,407.6 370.5,408.6 370.8,409.6 371.1,409.5 371.4,408.8 371.7,410.1 372.0,409.2 372.3,409.9 372.6,409.8 372.9,411.3 373.2,410.7 373.5,411.2 373.8,410.9 374.1,410.2 374.4,411.6 374.7,411.0 375.0,410.9 375.3,410.0 375.6,409.7 375.9,410.7 376.2,411.3 376.5,411.2 376.8,410.2 377.1,409.7 377.4,410.5 377.7,411.4 378.0,409.7 378.3,411.1 378.6,409.8 378.9,410.1 379.2,409.5 379.5,410.1 379.8,410.2 380.1,411.6 380.4,411.6 380.7,409.8 381.0,410.1 381.3,411.5 381.6,409.8 381.9,410.1 382.2,410.4 382.5,409.6 382.8,410.0 383.1,410.3 383.4,410.3 383.7,411.6 384.0,410.0 384.3,409.8 384.6,411.5 384.9,410.4 385.2,411.3 385.5,410.8 385.8,411.2 386.1,410.1 386.4,409.7 386.7,411.1 387.0,410.5 387.3,410.7 387.6,410.9 387.9,411.1 388.2,410.0 388.5,410.2 388.8,411.5 389.1,410.6 389.4,410.1 389.7,410.8 390.0,410.0 390.3,411.2 390.6,409.5 390.9,411.3 391.2,410.7 391.5,410.2 391.8,411.6 392.1,410.0 392.4,410.0 392.7,409.6 393.0,410.7 393.3,411.1 393.6,411.0 393.9,410.4 394.2,411.3 394.5,409.7 394.8,410.1 395.1,410.9 395.4,411.6 395.7,410.9 396.0,411.0 396.3,411.2 396.6,410.3 396.9,411.6 397.2,411.1 397.5,410.2 397.8,410.3 398.1,411.3 398.4,410.2 398.7,409.8 399.0,411.4 399.3,410.6 399.6,410.6 399.9,411.0 400.2,411.5 400.5,409.7 400.8,410.2 401.1,409.6 401.4,410.4 401.7,410.6 402.0,411.4 402.3,411.0 402.6,410.8 402.9,410.4 403.2,410.7 403.5,410.1 403.8,411.4 404.1,411.2 404.4,411.4 404.7,409.8 405.0,411.0 405.3,411.2 405.6,410.6 405.9,411.5 406.2,411.5 406.5,411.1 406.8,411.3 407.1,410.9 407.4,411.5 407.7,409.7 408.0,411.1 408.3,411.1 408.6,410.9 408.9,410.1 409.2,409.6 409.5,410.8 409.8,411.3 410.1,410.1 410.4,409.9 410.7,410.0 411.0,409.7 411.3,411.0 411.6,411.7 411.9,411.3 412.2,410.3 412.5,411.1 412.8,409.6 413.1,411.4 413.4,410.2 413.7,409.5 414.0,410.9 414.3,409.8 414.6,410.1 414.9,409.6 415.2,410.5 415.5,410.7 415.8,411.3 416.1,409.6 416.4,411.4 416.7,409.7 417.0,410.0 417.3,410.9 417.6,410.3 417.9,410.2 418.2,410.8 418.5,410.0 418.8,411.3 419.1,410.0 419.4,411.4 419.7,411.3 420.0,410.7 420.3,409.5 420.6,411.3 420.9,409.5 421.2,410.6 421.5,410.5 421.8,409.6 422.1,410.9 422.4,411.1 422.7,410.8 423.0,410.4 423.3,410.7 423.6,410.8 423.9,410.0 424.2,411.5 424.5,411.8 424.8,411.3 425.1,411.7 425.4,410.2 425.7,411.8 426.0,409.7 426.3,410.6 426.6,409.8 426.9,410.5 427.2,411.1 427.5,411.1 427.8,410.5 428.1,410.3 428.4,409.9 428.7,410.4 429.0,410.2 429.3,409.9 429.6,411.2 429.9,410.7 430.2,410.5 430.5,410.0 430.8,411.1 431.1,410.0 431.4,410.1 431.7,410.8 432.0,411.1 432.3,411.7 432.6,411.2 432.9,411.7 433.2,411.6 433.5,411.2 433.8,411.2 434.1,409.7 434.4,410.0 434.7,409.5 435.0,411.5 435.3,411.2 435.6,411.0 435.9,410.1 436.2,410.3 436.5,409.9 436.8,411.0 437.1,411.8 437.4,410.2 437.7,409.6 438.0,409.9 438.3,410.3 438.6,411.6 438.9,411.4 439.2,410.6 439.5,409.8 439.8,409.8 440.1,409.9 440.4,411.3 440.7,410.6 441.0,411.8 441.3,411.6 441.6,411.4 441.9,410.6 442.2,411.4 442.5,409.8 442.8,409.8 443.1,410.8 443.4,410.7 443.7,410.0 444.0,410.1 444.3,409.6 444.6,411.6 444.9,411.2 445.2,411.7 445.5,411.8 445.8,410.6 446.1,411.2 446.4,410.4 446.7,411.4 447.0,411.5 447.3,409.9 447.6,409.6 447.9,410.0 448.2,410.9 448.5,410.4 448.8,409.6 449.1,411.5 449.4,411.4 449.7,410.6 450.0,409.7 450.3,411.6 450.6,410.8 450.9,409.7 451.2,410.3 451.5,411.0 451.8,411.6 452.1,410.7 452.4,411.0 452.7,410.0 453.0,410.1 453.3,411.6 453.6,410.4 453.9,409.8 454.2,410.9 454.5,409.9 454.8,410.0 455.1,410.6 455.4,410.9 455.7,411.0 456.0,411.2 456.3,410.6 456.6,409.7 456.9,411.2 457.2,409.7 457.5,410.7 457.8,410.5 458.1,411.1 458.4,411.2 458.7,410.1 459.0,411.1 459.3,411.2 459.6,410.7 459.9,409.9 460.2,411.7 460.5,411.0 460.8,409.7 461.1,410.1 461.4,411.9 461.7,410.1 462.0,410.5 462.3,411.4 462.6,411.5 462.9,411.0 463.2,411.3 463.5,409.7 463.8,409.8 464.1,411.8 464.4,411.4 464.7,409.7 465.0,409.7 465.3,410.2 465.6,411.7 465.9,410.1 466.2,411.1 466.5,411.7 466.8,411.1 467.1,411.7 467.4,410.2 467.7,410.0 468.0,409.6 468.3,411.3 468.6,409.8 468.9,411.8 469.2,411.2 469.5,410.0 469.8,411.5 470.1,410.0 470.4,410.8 470.7,409.9 471.0,411.4 471.3,411.7 471.6,411.7 471.9,409.6 472.2,411.6 472.5,410.9 472.8,411.5 473.1,410.8 473.4,411.0 473.7,411.0 474.0,411.5 474.3,409.8 474.6,409.7 474.9,410.9 475.2,410.3 475.5,410.5 475.8,409.6 476.1,411.3 476.4,409.7 476.7,411.5 477.0,411.5 477.3,410.7 477.6,409.9 477.9,411.1 478.2,410.1 478.5,410.6 478.8,409.9 479.1,411.9 479.4,410.9 479.7,410.4 480.0,409.9 480.3,411.3 480.6,411.6 480.9,411.6 481.2,409.9 481.5,410.5 481.8,410.3 482.1,411.4 482.4,410.0 482.7,411.0 483.0,411.9 483.3,411.4 483.6,409.7 483.9,409.8 484.2,409.9 484.5,411.2 484.8,410.8 485.1,410.4 485.4,410.0 485.7,409.7 486.0,409.9 486.3,409.8 486.6,410.2 486.9,409.6 487.2,409.3 487.5,408.9 487.8,408.2 488.1,407.3 488.4,405.1 488.7,406.0 489.0,405.8 489.3,404.2 489.6,404.5 489.9,401.6 490.2,402.2 490.5,399.8 490.8,399.2 491.1,396.9 491.4,395.8 491.7,394.7 492.0,393.4 492.3,391.7 492.6,391.3 492.9,391.3 493.2,389.3 493.5,388.7 493.8,387.1 494.1,386.0 494.4,385.0 494.7,383.0 495.0,380.6 495.3,379.1 495.6,378.1 495.9,375.8 496.2,374.9 496.5,375.0 496.8,373.7 497.1,371.0 497.4,370.6 497.7,369.3 498.0,368.1 498.3,366.5 498.6,364.5 498.9,362.2 499.2,362.4 499.5,359.9 499.8,359.2 500.1,357.3 500.4,356.4 500.7,356.2 501.0,353.1 501.3,352.7 501.6,351.7 501.9,350.2 502.2,349.9 502.5,347.5 502.8,347.4 503.1,345.6 503.4,345.0 503.7,341.8 504.0,340.8 504.3,339.8 504.6,340.0 504.9,336.7 505.2,336.0 505.5,335.8 505.8,335.2 506.1,332.1 506.4,331.4 506.7,330.5 507.0,329.1 507.3,327.8 507.6,326.4 507.9,323.8 508.2,322.4 508.5,320.5 508.8,320.6 509.1,318.0 509.4,316.7 509.7,316.9 510.0,314.7 510.3,313.2 510.6,311.9 510.9,310.4 511.2,309.2 511.5,306.8 511.8,304.8 512.1,303.4 512.4,301.9 512.7,301.3 513.0,299.5 513.3,298.1 513.6,297.6 513.9,297.4 514.2,295.4 514.5,293.1 514.8,292.9 515.1,290.2 515.4,288.7 515.7,287.8 516.0,286.7 516.3,286.0 516.6,284.1 516.9,283.5 517.2,280.7 517.5,281.3 517.8,278.6 518.1,278.3 518.4,275.2 518.7,275.7 519.0,273.0 519.3,273.1 519.6,271.7 519.9,270.0 520.2,267.8 520.5,265.9 520.8,265.0 521.1,265.3 521.4,262.3 521.7,262.1 522.0,260.6 522.3,259.5 522.6,257.0 522.9,255.6 523.2,254.7 523.5,256.2 523.8,254.3 524.1,254.4 524.4,253.7 524.7,252.4 525.0,251.5 525.3,251.2 525.6,252.9 525.9,251.1 526.2,252.8 526.5,251.2 526.8,251.9 527.1,250.3 527.4,251.7 527.7,250.2 528.0,250.4 528.3,250.7 528.6,249.7 528.9,250.0 529.2,251.2 529.5,249.9 529.8,250.1 530.1,250.9 530.4,249.6 530.7,249.5 531.0,249.5 531.3,249.8 531.6,249.7 531.9,250.2 532.2,249.8 532.5,250.8 532.8,248.9 533.1,250.3 533.4,250.7 533.7,249.3 534.0,248.8 534.3,249.8 534.6,249.0 534.9,249.8 535.2,250.4 535.5,249.0 535.8,249.0 536.1,249.9 536.4,249.1 536.7,249.3 537.0,249.8 537.3,249.0 537.6,248.9 537.9,249.6 538.2,249.8 538.5,250.9 538.8,250.0 539.1,248.9 539.4,249.3 539.7,250.5 540.0,250.0 540.3,250.8 540.6,251.0 540.9,250.7 541.2,249.0 541.5,250.9 541.8,250.0 542.1,249.3 542.4,249.1 542.7,250.7 543.0,249.2 543.3,248.9 543.6,249.4 543.9,250.9 544.2,249.8 544.5,250.4 544.8,248.9 545.1,249.8 545.4,249.5 545.7,249.2 546.0,250.3 546.3,249.6 546.6,249.0 546.9,251.0 547.2,249.9 547.5,249.2 547.8,248.8 548.1,250.3 548.4,249.9 548.7,248.8 549.0,249.8 549.3,250.5 549.6,250.0 549.9,249.3 550.2,249.9 550.5,250.1 550.8,250.2 551.1,249.1 551.4,250.6 551.7,250.9 552.0,250.5 552.3,250.7 552.6,249.6 552.9,250.8 553.2,249.2 553.5,249.3 553.8,250.1 554.1,250.8 554.4,248.9 554.7,249.2 555.0,248.8 555.3,249.8 555.6,249.1 555.9,249.2 556.2,250.5 556.5,250.1 556.8,250.9 557.1,249.7 557.4,250.3 557.7,248.8 558.0,250.9 558.3,249.3 558.6,249.8 558.9,249.9 559.2,250.9 559.5,249.9 559.8,251.0 560.1,250.2 560.4,249.2 560.7,250.7 561.0,249.2 561.3,251.0 561.6,249.8 561.9,249.3 562.2,251.0 562.5,249.5 562.8,249.7 563.1,249.5 563.4,250.3 563.7,248.8 564.0,249.6 564.3,249.1 564.6,250.7 564.9,248.8 565.2,250.1 565.5,249.3 565.8,249.8 566.1,250.0 566.4,250.4 566.7,249.1 567.0,249.3 567.3,249.0 567.6,251.0 567.9,249.1 568.2,249.1 568.5,250.0 568.8,250.1 569.1,250.8 569.4,248.9 569.7,249.3 570.0,249.1 570.3,250.1 570.6,249.8 570.9,249.7 571.2,250.8 571.5,250.3 571.8,250.7 572.1,251.0 572.4,249.4 572.7,250.9 573.0,249.7 573.3,248.9 573.6,250.9 573.9,249.0 574.2,248.8 574.5,249.4 574.8,249.4 575.1,251.0 575.4,250.8 575.7,249.7 576.0,250.0 576.3,250.7 576.6,250.6 576.9,250.3 577.2,249.9 577.5,249.0 577.8,249.3 578.1,250.3 578.4,250.1 578.7,250.6 579.0,250.8 579.3,251.0 579.6,249.2 579.9,248.9 580.2,250.8 580.5,250.1 580.8,249.2 581.1,250.3 581.4,249.3 581.7,249.3 582.0,249.6 582.3,250.0 582.6,250.3 582.9,248.9 583.2,250.5 583.5,250.2 583.8,249.8 584.1,250.3 584.4,250.6 584.7,248.8 585.0,249.8 585.3,250.3 585.6,250.4 585.9,250.2 586.2,249.2 586.5,251.0 586.8,250.6 587.1,249.3 587.4,249.7 587.7,251.0 588.0,249.2 588.3,249.7 588.6,251.0 588.9,250.8 589.2,249.3 589.5,250.4 589.8,249.6 590.1,250.3 590.4,250.5 590.7,249.0 591.0,249.3 591.3,249.2 591.6,249.4 591.9,248.8 592.2,249.1 592.5,249.7 592.8,249.7 593.1,248.9 593.4,250.1 593.7,250.9 594.0,250.1 594.3,249.6 594.6,250.4 594.9,249.8 595.2,249.2 595.5,249.9 595.8,248.8 596.1,250.3 596.4,249.1 596.7,249.6 597.0,251.0 597.3,250.5 597.6,250.7 597.9,250.2 598.2,250.2 598.5,250.4 598.8,251.0 599.1,249.2 599.4,250.5 599.7,249.4 600.0,249.3 600.3,250.6 600.6,250.1 600.9,250.7 601.2,250.8 601.5,250.1 601.8,249.2 602.1,248.8 602.4,250.0 602.7,250.4 603.0,249.4 603.3,248.9 603.6,248.8 603.9,249.1 604.2,250.4 604.5,248.8 604.8,249.3 605.1,249.4 605.4,250.4 605.7,251.0 606.0,248.8 606.3,249.0 606.6,250.9 606.9,251.0 607.2,249.1 607.5,249.5 607.8,250.0 608.1,249.5 608.4,249.7 608.7,249.9 609.0,249.3 609.3,248.9 609.6,248.9 609.9,249.1 610.2,249.0 610.5,250.2 610.8,250.4 611.1,249.4 611.4,250.6 611.7,250.4 612.0,249.5 612.3,249.9 612.6,249.2 612.9,250.9 613.2,250.0 613.5,248.9 613.8,249.1 614.1,250.3 614.4,249.6 614.7,250.4 615.0,249.3 615.3,250.6 615.6,250.6 615.9,249.0 616.2,250.1 616.5,249.2 616.8,250.4 617.1,250.6 617.4,250.6 617.7,249.3 618.0,249.0 618.3,250.3 618.6,250.0 618.9,249.1 619.2,249.2 619.5,250.1 619.8,249.0 620.1,250.2 620.4,249.3 620.7,249.3 621.0,249.7 621.3,250.0 621.6,250.4 621.9,248.8 622.2,250.4 622.5,249.3 622.8,249.4 623.1,250.2 623.4,250.3 623.7,250.2 624.0,250.8 624.3,249.2 624.6,249.5 624.9,250.3 625.2,249.3 625.5,249.1 625.8,249.3 626.1,250.5 626.4,250.7 626.7,250.4 627.0,251.0 627.3,250.6 627.6,249.5 627.9,249.5 628.2,250.4 628.5,248.9 628.8,250.2 629.1,249.0 629.4,248.9 629.7,249.9 630.0,249.1 630.3,250.9 630.6,250.8 630.9,249.8 631.2,249.2 631.5,249.0 631.8,249.9 632.1,249.9 632.4,249.6 632.7,250.4 633.0,250.0 633.3,250.5 633.6,249.0 633.9,248.9 634.2,249.6 634.5,249.9 634.8,249.3 635.1,250.3 635.4,249.3 635.7,249.5 636.0,249.8 636.3,250.4 636.6,250.5 636.9,249.6 637.2,249.8 637.5,250.9 637.8,250.9 638.1,250.2 638.4,249.0 638.7,249.8 639.0,250.2 639.3,249.4 639.6,248.8 639.9,251.0 640.2,250.8 640.5,249.0 640.8,249.8 641.1,250.2 641.4,249.4 641.7,248.9 642.0,250.5 642.3,250.5 642.6,249.8 642.9,248.9 643.2,249.7 643.5,249.0 643.8,251.0 644.1,248.9 644.4,249.4 644.7,250.5 645.0,249.1 645.3,249.0 645.6,248.9 645.9,249.1 646.2,250.0 646.5,250.7 646.8,249.1 647.1,249.1 647.4,250.5 647.7,249.7 648.0,249.5 648.3,249.0 648.6,249.3 648.9,251.0 649.2,249.0 649.5,249.3 649.8,250.5 650.1,250.8 650.4,250.8 650.7,249.8 651.0,250.9 651.3,250.1 651.6,249.4 651.9,249.8 652.2,250.4 652.5,250.4 652.8,249.0 653.1,249.2 653.4,251.0 653.7,249.0 654.0,250.6 654.3,249.5 654.6,249.3 654.9,249.3 655.2,249.8 655.5,251.0 655.8,249.1 656.1,250.7 656.4,249.5 656.7,249.1 657.0,250.5 657.3,249.5 657.6,249.2 657.9,249.7 658.2,250.6 658.5,250.7 658.8,250.1 659.1,248.8 659.4,250.5 659.7,250.1 660.0,250.8 660.3,250.9 660.6,249.5 660.9,250.7 661.2,250.6 661.5,249.4 661.8,249.6 662.1,249.6 662.4,249.6 662.7,249.6 663.0,249.0 663.3,249.3 663.6,250.8 663.9,249.7 664.2,250.2 664.5,250.8 664.8,250.5 665.1,249.3 665.4,250.9 665.7,250.6 666.0,251.0 666.3,250.4 666.6,250.5 666.9,250.6 667.2,249.3 667.5,250.3 667.8,249.6 668.1,250.7 668.4,249.1 668.7,250.0 669.0,249.5 669.3,250.6 669.6,249.5 669.9,250.7 670.2,250.7 670.5,250.8 670.8,249.1 671.1,250.9 671.4,250.5 671.7,250.3 672.0,250.3 672.3,248.9 672.6,250.8 672.9,250.0 673.2,249.8 673.5,249.5 673.8,250.6 674.1,250.5 674.4,250.8 674.7,249.2 675.0,249.5 675.3,249.3 675.6,249.0 675.9,249.5 676.2,248.8 676.5,250.6 676.8,249.3 677.1,248.9 677.4,248.9 677.7,250.5 678.0,249.2 678.3,249.8 678.6,249.7 678.9,250.6 679.2,250.9 679.5,249.5 679.8,250.2 680.1,250.8 680.4,249.8 680.7,250.8 681.0,250.4 681.3,249.5 681.6,250.8 681.9,250.1 682.2,249.0 682.5,250.1 682.8,250.7 683.1,250.0 683.4,250.1 683.7,250.1 684.0,251.3 684.3,251.0 684.6,250.1 684.9,250.6 685.2,250.9 685.5,252.7 685.8,252.5 686.1,251.5 686.4,253.7 686.7,252.1 687.0,253.7 687.3,254.5 687.6,256.3 687.9,256.8 688.2,257.2 688.5,259.3 688.8,261.2 689.1,262.3 689.4,262.4 689.7,263.3 690.0,265.6 690.3,266.9 690.6,266.7 690.9,269.4 691.2,270.8 691.5,270.7 691.8,271.6 692.1,273.5 692.4,275.1 692.7,274.6 693.0,275.9 693.3,277.1 693.6,279.1 693.9,279.0 694.2,280.9 694.5,281.9 694.8,283.4 695.1,283.3 695.4,286.3 695.7,287.5 696.0,287.6 696.3,289.2 696.6,288.9 696.9,291.7 697.2,292.0 697.5,293.6 697.8,294.9 698.1,294.9 698.4,297.3 698.7,296.7 699.0,297.4 699.3,299.6 699.6,301.8 699.9,303.2 700.2,304.7 700.5,305.1 700.8,307.4 701.1,307.9 701.4,308.3 701.7,310.8 702.0,312.6 702.3,313.1 702.6,314.9 702.9,315.4 703.2,316.9 703.5,318.6 703.8,320.1 704.1,321.4 704.4,321.9 704.7,323.1 705.0,325.2 705.3,327.5 705.6,328.9 705.9,329.1 706.2,330.5 706.5,332.5 706.8,333.0 707.1,335.3 707.4,337.3 707.7,337.0 708.0,339.2 708.3,340.9 708.6,342.2 708.9,343.5 709.2,344.8 709.5,345.1 709.8,347.7 710.1,349.2 710.4,348.5 710.7,351.9 711.0,352.1 711.3,352.6 711.6,353.9 711.9,356.8 712.2,357.9 712.5,358.0 712.8,360.0 713.1,361.7 713.4,363.8 713.7,363.5 714.0,365.7 714.3,365.8 714.6,366.9 714.9,368.0 715.2,369.8 715.5,371.6 715.8,372.1 716.1,373.0 716.4,374.3 716.7,375.3 717.0,376.8 717.3,378.3 717.6,379.9 717.9,380.4 718.2,382.4 718.5,383.5 718.8,386.0 719.1,386.0 719.4,388.2 719.7,388.3 720.0,388.8 720.3,390.9 720.6,391.0 720.9,392.2 721.2,393.1 721.5,395.7 721.8,397.4 722.1,397.3 722.4,398.3 722.7,399.6 723.0,400.6 723.3,402.5 723.6,403.0 723.9,403.3 724.2,405.4 724.5,405.2 724.8,404.3 725.1,406.7 725.4,406.9 725.7,406.5 726.0,407.6 726.3,408.7 726.6,407.8 726.9,408.1 727.2,408.0 727.5,408.8 727.8,409.3 728.1,409.7 728.4,410.4 728.7,408.8 729.0,409.5 729.3,410.8 729.6,410.9 729.9,410.6 730.2,410.9 730.5,410.2 730.8,411.6 731.1,410.7 731.4,410.4 731.7,409.9 732.0,409.8 732.3,411.6 732.6,411.5 732.9,409.7 733.2,410.4 733.5,410.8 733.8,410.9 734.1,410.6 734.4,411.8 734.7,410.6 735.0,411.1 735.3,412.0 735.6,411.3 735.9,410.9 736.2,410.6 736.5,410.7 736.8,411.3 737.1,411.7 737.4,410.4 737.7,410.7 738.0,410.7 738.3,410.7 738.6,411.9 738.9,411.1 739.2,410.5 739.5,410.6 739.8,411.7 740.1,410.2 740.4,411.4 740.7,409.9 741.0,410.3 741.3,410.0 741.6,411.7 741.9,410.2 742.2,410.4 742.5,410.0 742.8,410.5 743.1,411.5 743.4,411.5 743.7,411.9 744.0,412.0 744.3,411.1 744.6,412.0 744.9,410.1 745.2,412.0 745.5,410.8 745.8,410.3 746.1,411.6 746.4,411.8 746.7,410.7 747.0,410.1 747.3,411.9 747.6,411.6 747.9,411.2 748.2,412.1 748.5,409.9 748.8,410.0 749.1,410.1 749.4,409.9 749.7,411.5 750.0,411.3 750.3,410.1 750.6,410.2 750.9,410.3 751.2,411.3 751.5,411.4 751.8,412.1 752.1,410.7 752.4,412.1 752.7,410.8 753.0,410.7 753.3,410.4 753.6,410.4 753.9,412.1 754.2,412.1 754.5,411.5 754.8,410.3 755.1,410.3 755.4,410.2 755.7,410.7 756.0,411.5 756.3,410.0 756.6,411.1 756.9,411.4 757.2,409.9 757.5,410.9 757.8,411.7 758.1,411.2 758.4,410.9 758.7,411.9 759.0,411.2 759.3,410.6 759.6,410.8 759.9,412.0 760.2,411.8 760.5,412.0 760.8,411.1 761.1,410.2 761.4,410.3 761.7,410.7 762.0,411.4 762.3,409.9 762.6,411.7 762.9,411.7 763.2,411.0 763.5,409.9 763.8,411.7 764.1,410.8 764.4,411.4 764.7,411.2 765.0,411.5 765.3,410.8 765.6,412.1 765.9,412.0 766.2,412.0 766.5,411.3 766.8,410.6 767.1,410.7 767.4,410.5 767.7,411.9 768.0,411.7 768.3,411.7 768.6,411.7 768.9,412.1 769.2,411.4 769.5,410.6 769.8,411.6 770.1,410.5 770.4,411.3 770.7,410.2 771.0,411.8 771.3,411.0 771.6,410.5 771.9,412.0 772.2,410.0 772.5,412.0 772.8,411.6 773.1,410.2 773.4,411.6 773.7,411.2 774.0,411.9 774.3,411.2 774.6,410.8 774.9,412.0 775.2,410.1 775.5,411.6 775.8,410.1 776.1,410.5 776.4,410.1 776.7,411.9 777.0,410.9 777.3,411.5 777.6,410.4" fill="none" stroke="#0000fa" stroke-width="1.7" stroke-linejoin="round"/>
  <rect x="4.5" y="127.5" width="8" height="8" fill="#0000ff" stroke="#000" shape-rendering="crispEdges"/>
  <rect x="810.5" y="127.5" width="7" height="8" fill="#ee1c25" stroke="#000" shape-rendering="crispEdges"/>
  <rect x="6" y="604" width="35" height="13" fill="#8080ff"/>
  <rect x="780" y="604" width="35" height="13" fill="#ff9098"/>
</svg>
<div class="yl b" style="top:122px">7,0</div><div class="yl r" style="top:122px">7,0</div>
<div class="yl b" style="top:167px">6,0</div><div class="yl r" style="top:167px">6,0</div>
<div class="yl b" style="top:212px">5,0</div><div class="yl r" style="top:212px">5,0</div>
<div class="yl b" style="top:257px">4,0</div><div class="yl r" style="top:257px">4,0</div>
<div class="yl b" style="top:302px">3,0</div><div class="yl r" style="top:302px">3,0</div>
<div class="yl b" style="top:346px">2,0</div><div class="yl r" style="top:346px">2,0</div>
<div class="yl b" style="top:391px">1,0</div><div class="yl r" style="top:391px">1,0</div>
<div class="yl b" style="top:436px">0,0</div><div class="yl r" style="top:436px">0,0</div>
<div class="yl b" style="top:481px">-1,0</div><div class="yl r" style="top:481px">-1,0</div>
<div class="yl b" style="top:526px">-2,0</div><div class="yl r" style="top:526px">-2,0</div>
<div class="yl b" style="top:570px">-3,0</div><div class="yl r" style="top:570px">-3,0</div>

<div class="xl" style="left:22.5px">0,0</div>
<div class="xl" style="left:96.5px">0,5</div>
<div class="xl" style="left:170.5px">1,0</div>
<div class="xl" style="left:243.5px">1,5</div>
<div class="xl" style="left:317.5px">2,0</div>
<div class="xl" style="left:390.5px">2,5</div>
<div class="xl" style="left:464.5px">3,0</div>
<div class="xl" style="left:538.5px">3,5</div>
<div class="xl" style="left:611.5px">4,0</div>
<div class="xl" style="left:685.5px">4,5</div>
<div class="xl" style="left:759.5px">5,0</div>

<svg class="abs" style="left:0;top:560px" width="821" height="40" viewBox="0 560 821 40">
  <rect x="38.5" y="574.5" width="8" height="8" fill="#fff" stroke="#000" shape-rendering="crispEdges"/>
  <circle cx="779.5" cy="578.5" r="4.8" fill="#1f7f8f" stroke="#103038" stroke-width="1"/>
</svg>
<div class="lbl" style="left:15px;top:603px;color:#dcdcff;font-size:10px;letter-spacing:-0.4px">x2,0</div>
<div class="lbl" style="left:789px;top:603px;color:#ffe0e0;font-size:10px;letter-spacing:-0.4px">x2,0</div>
<div class="lbl" style="left:44.5px;top:603px;font-size:11.5px">s</div>
<div class="lbl" style="left:32px;top:141px;color:#1414ff;font-size:12.4px">V</div>
<div class="lbl" style="left:782px;top:141px;color:#ee1c25;font-size:12.4px">V</div>
</body>
</html>
